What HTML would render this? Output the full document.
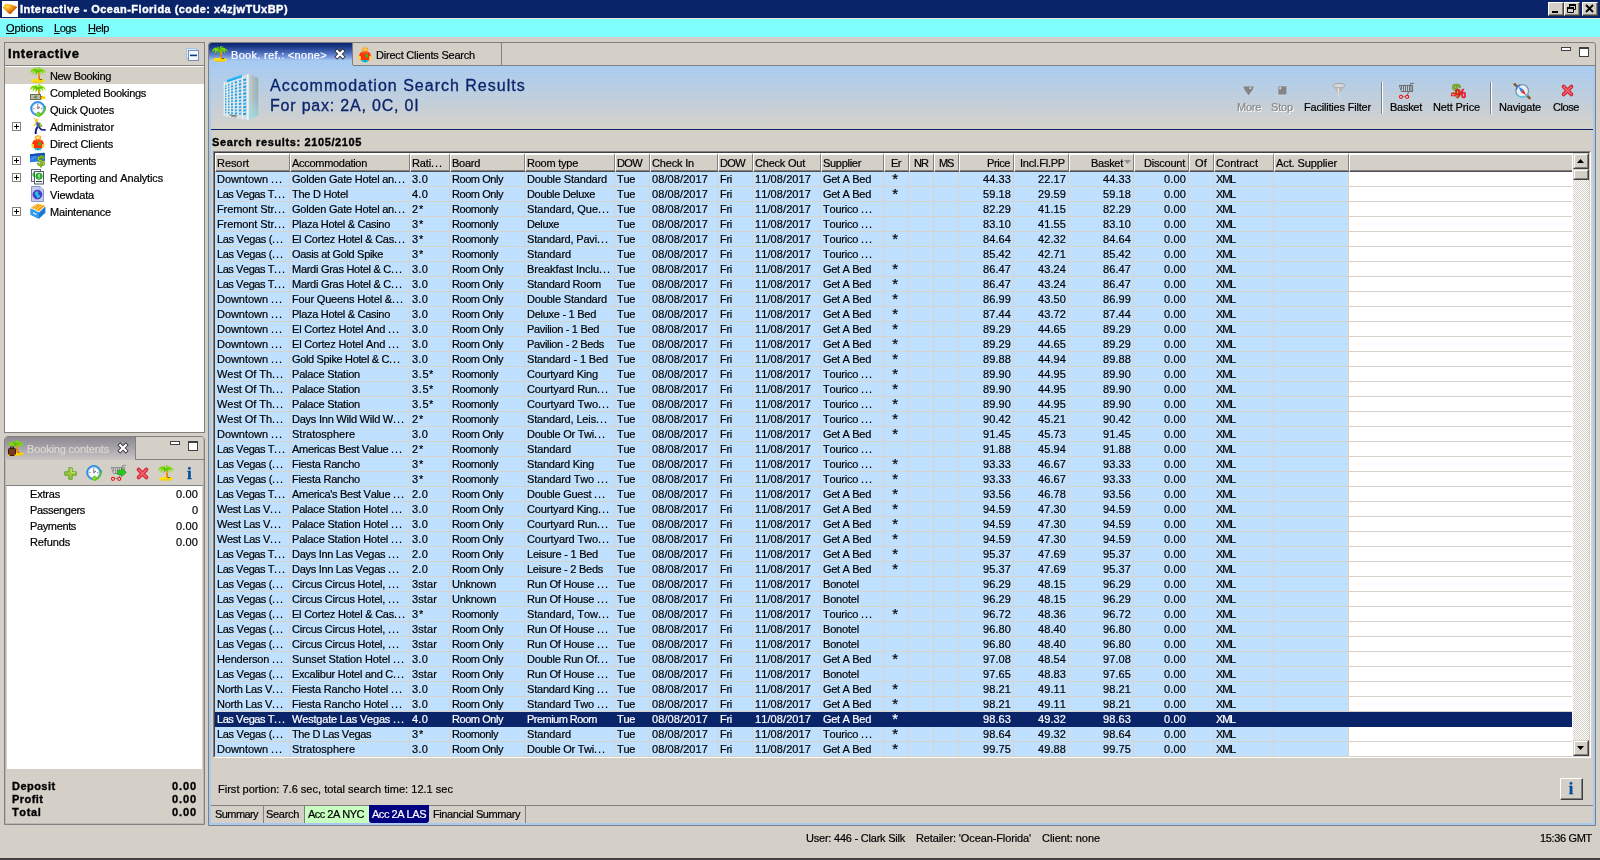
<!DOCTYPE html>
<html><head><meta charset="utf-8"><title>Interactive</title>
<style>
html,body{margin:0;padding:0}
body{width:1600px;height:860px;overflow:hidden;background:#d4d0c8;position:relative;font-family:"Liberation Sans",sans-serif;font-size:11px;color:#000;line-height:15px;font-kerning:none;font-variant-ligatures:none;-webkit-text-stroke:0.2px}
div,span{box-sizing:border-box}
#w{position:absolute;left:0;top:0;width:1600px;height:860px;overflow:hidden;will-change:transform}
.a{position:absolute}
.t{position:absolute;white-space:nowrap;line-height:13px}
.b{font-weight:bold;-webkit-text-stroke:0.35px}
svg{position:absolute;overflow:visible}
/* table */
#tb{position:absolute;left:215px;top:172px;width:1357px;height:584px;overflow:hidden;background:#fff}
.r{position:absolute;left:0;width:1357px;height:15px;background:#c0e0ff;border-bottom:1px solid #d8d4cc}
.r.w{background:#fff}
.c{position:absolute;top:0;height:14px;line-height:15px;white-space:nowrap;overflow:hidden;border-right:1px solid #d8d4cc;padding:0 2px 0 2px}
.c.rt{text-align:right;padding-right:2px}
.c.ct{text-align:center}
.c i,.h i{font-style:normal;letter-spacing:0.94px}
.c10{font-size:15px;line-height:14px}
.sel{background:#0a246a!important;color:#fff;border-bottom-color:#0a246a!important}
.sel .c{border-right-color:#0a246a}
.h{position:absolute;top:153px;height:19px;background:#d4d0c8;border-top:2px solid #fff;border-left:1px solid #fff;border-right:1px solid #808080;border-bottom:1px solid #505050;box-shadow:inset 0 -1px 0 #808080;line-height:15px;white-space:nowrap;overflow:hidden;padding:1px 2px 0 1px}
.h.rt{text-align:right;padding-right:3px}
.h.ct{text-align:center}
.k0{letter-spacing:-0.046px}.k1{letter-spacing:-0.22px}.k2{letter-spacing:0.236px}.k3{letter-spacing:-0.446px}.k4{letter-spacing:-0.171px}.k5{letter-spacing:-0.318px}.k6{letter-spacing:0.095px}.k7{letter-spacing:-0.275px}.k8{letter-spacing:-0.306px}.k9{letter-spacing:1.72px}.k10{letter-spacing:0.148px}.k11{letter-spacing:-1.21px}.k12{letter-spacing:-0.432px}.k13{letter-spacing:-0.245px}.k14{letter-spacing:-0.32px}.k15{letter-spacing:-0.097px}.k16{letter-spacing:0.801px}.k17{letter-spacing:-0.44px}.k18{letter-spacing:-0.042px}.k19{letter-spacing:-0.217px}.k20{letter-spacing:-0.297px}.k21{letter-spacing:-0.373px}.k22{letter-spacing:-0.336px}.k23{letter-spacing:-0.237px}.k24{letter-spacing:-0.154px}.k25{letter-spacing:-0.327px}.k26{letter-spacing:-0.081px}.k27{letter-spacing:-0.276px}.k28{letter-spacing:-0.05px}.k29{letter-spacing:-0.234px}.k30{letter-spacing:-0.175px}.k31{letter-spacing:-0.269px}.k32{letter-spacing:-0.183px}.k33{letter-spacing:-0.315px}.k34{letter-spacing:-0.326px}.k35{letter-spacing:-0.347px}.k36{letter-spacing:-0.135px}.k37{letter-spacing:-0.062px}.k38{letter-spacing:-0.21px}.k39{letter-spacing:0.607px}.k40{letter-spacing:-0.169px}.k41{letter-spacing:-0.118px}.k42{letter-spacing:-0.087px}.k43{letter-spacing:-0.138px}.k44{letter-spacing:0.002px}.k45{letter-spacing:-0.254px}.k46{letter-spacing:-0.308px}.k47{letter-spacing:-0.225px}.k48{letter-spacing:-0.209px}.k49{letter-spacing:-0.298px}.k50{letter-spacing:-0.255px}.k51{letter-spacing:-0.324px}.k52{letter-spacing:-0.178px}.k53{letter-spacing:-0.29px}.k54{letter-spacing:-0.24px}.k55{letter-spacing:-0.256px}.k56{letter-spacing:-0.202px}.k57{letter-spacing:0.109px}.k58{letter-spacing:-0.266px}.k59{letter-spacing:-0.212px}.k60{letter-spacing:-0.187px}.k61{letter-spacing:-0.041px}.k62{letter-spacing:-0.111px}.k63{letter-spacing:-0.28px}.k64{letter-spacing:-0.186px}.k65{letter-spacing:-0.198px}.k66{letter-spacing:-0.534px}.k67{letter-spacing:-0.4px}.c0{left:0px;width:75px}.c1{left:75px;width:120px}.c2{left:195px;width:40px}.c3{left:235px;width:75px}.c4{left:310px;width:90px}.c5{left:400px;width:35px}.c6{left:435px;width:68px}.c7{left:503px;width:35px}.c8{left:538px;width:68px}.c9{left:606px;width:63px}.c10{left:669px;width:25px}.c11{left:694px;width:25px}.c12{left:719px;width:25px}.c13{left:744px;width:55px}.c14{left:799px;width:55px}.c15{left:854px;width:65px}.c16{left:919px;width:55px}.c17{left:974px;width:25px}.c18{left:999px;width:60px}.c19{left:1059px;width:75px}</style></head><body>
<div id="w">
<div class="a" style="left:0;top:0;width:1600px;height:18px;background:#0a246a"></div>
<div class="a" style="left:0;top:18px;width:1600px;height:1px;background:#e8e6e0"></div>
<div class="a" style="left:2px;top:1px;width:16px;height:16px;background:#fff"></div>
<svg style="left:2px;top:1px" width="16" height="16" viewBox="0 0 16 16"><defs><radialGradient id="gg" cx="0.32" cy="0.25" r="0.8"><stop offset="0" stop-color="#ffe84a"/><stop offset="0.35" stop-color="#f8a818"/><stop offset="0.7" stop-color="#d86c0c"/><stop offset="1" stop-color="#a84408"/></radialGradient></defs><path d="M1.2 6.8 L3.6 3.2 L9.4 4 L14.8 6.2 L8.6 12.8 L6.6 12z" fill="url(#gg)" stroke="url(#gg)" stroke-width="0.8" stroke-linejoin="round"/></svg>
<div class="t b" style="left:20px;top:3px;letter-spacing:0.458px;color:#fff">Interactive - Ocean-Florida (code: x4zjwTUxBP)</div>
<div class="a" style="left:1548px;top:2px;width:16px;height:14px;background:#d4d0c8;border-top:1px solid #fff;border-left:1px solid #fff;border-right:1px solid #404040;border-bottom:1px solid #404040"></div><div class="a" style="left:1549px;top:3px;width:14px;height:12px;border-right:1px solid #808080;border-bottom:1px solid #808080"></div>
<div class="a" style="left:1564px;top:2px;width:16px;height:14px;background:#d4d0c8;border-top:1px solid #fff;border-left:1px solid #fff;border-right:1px solid #404040;border-bottom:1px solid #404040"></div><div class="a" style="left:1565px;top:3px;width:14px;height:12px;border-right:1px solid #808080;border-bottom:1px solid #808080"></div>
<div class="a" style="left:1582px;top:2px;width:16px;height:14px;background:#d4d0c8;border-top:1px solid #fff;border-left:1px solid #fff;border-right:1px solid #404040;border-bottom:1px solid #404040"></div><div class="a" style="left:1583px;top:3px;width:14px;height:12px;border-right:1px solid #808080;border-bottom:1px solid #808080"></div>
<div class="a" style="left:1552px;top:11px;width:6px;height:2px;background:#000"></div>
<svg style="left:1564px;top:2px" width="16" height="14"><path d="M5.5 3.5h6v4h-6z M5 3h7" fill="none" stroke="#000" stroke-width="1"/><rect x="5" y="2" width="7" height="2" fill="#000"/><rect x="3" y="6" width="6" height="5" fill="#d4d0c8"/><path d="M3.5 6.5h6v4h-6z" fill="none" stroke="#000"/><rect x="3" y="5" width="7" height="2" fill="#000"/></svg>
<svg style="left:1582px;top:2px" width="16" height="14"><path d="M4 3l7 7M11 3l-7 7" stroke="#000" stroke-width="1.8" fill="none"/></svg>
<div class="a" style="left:0;top:19px;width:1600px;height:18px;background:#80ffff"></div>
<div class="t" style="left:6px;top:22px;letter-spacing:-0.13px;"><u>O</u>ptions</div>
<div class="t" style="left:54px;top:22px;letter-spacing:-0.463px;"><u>L</u>ogs</div>
<div class="t" style="left:88px;top:22px;letter-spacing:-0.406px;"><u>H</u>elp</div>
<div class="a" style="left:4px;top:42px;width:201px;height:391px;border:1px solid #808080;background:#d4d0c8"></div>
<div class="a" style="left:5px;top:65px;width:199px;height:1px;background:#808080"></div>
<div class="a" style="left:5px;top:66px;width:199px;height:366px;background:#fff"></div>
<div class="a" style="left:5px;top:67px;width:199px;height:17px;background:#d4d0c8"></div>
<div class="t b" style="left:8px;top:45px;letter-spacing:0.588px;font-size:13px;line-height:17px">Interactive</div>
<svg style="left:186px;top:48px" width="14" height="14" viewBox="0 0 14 14"><rect x="0.5" y="0.5" width="10" height="10" fill="#dcecfa" stroke="#a8c0e0"/><rect x="2.5" y="2.5" width="10" height="10" fill="#f4f9ff" stroke="#7a8cb8"/><rect x="4" y="6.6" width="7" height="1.6" fill="#0a3a7a"/></svg>
<div class="t" style="left:50px;top:70px;letter-spacing:-0.347px;">New Booking</div>
<svg style="left:30px;top:67px" width="16" height="16" viewBox="0 0 16 16"><ellipse cx="8" cy="13.6" rx="7" ry="1.9" fill="#ffe010"/><path d="M2.4 14.4h11.2l-1.6 1.2h-8z" fill="#f4c400"/><path d="M7.2 4 C8.2 6.4 8.4 9.6 8 12.8 L10 12.8 C10.2 9.4 9.8 6.2 8.8 3.8z" fill="#f0a410"/><path d="M8.6 6.4l0.9 0.5M8.4 9l1.2 0.4M9 11l0.8 0.2" stroke="#c43c00" stroke-width="0.9"/><path d="M9.6 12.2h2.6v0.9h-2.6z" fill="#6a3a08"/><path d="M7.8 3.8 C6.4 1.2 3.4 0.6 1.6 2.6 C0.6 3.8 0.2 5.2 0.2 6.6 C1.2 5 2.2 4.2 3.4 4 C2.6 5.2 2.4 6.6 2.8 8 C3.6 6.2 4.6 5.2 6 4.8 C5.4 6 5.4 7.4 5.8 8.6 C6.4 6.8 7 5.6 8 5 C9 5.4 9.8 6.6 10.2 8.2 C10.8 6.8 10.6 5.6 10 4.6 C11.4 5 12.4 6 13 7.8 C13.6 6.4 13.2 5 12.4 4 C13.6 4.2 14.8 5 15.8 6.4 C15.6 4.4 14.6 3 13 2.4 C11.6 1 9.4 1.2 7.8 3.8z" fill="#7cdc00"/><path d="M7.8 3.8 C6.8 2.4 5.2 2 3.6 2.6 C5.2 2.8 6.2 3.6 6.6 4.8 C5.8 6 5.6 7.2 5.8 8.6 C6.4 6.8 7 5.6 8 5 C9.2 4.2 10.8 4 12.4 4 C11.2 3 9.2 3 7.8 3.8z" fill="#54b400"/><path d="M8 0.6 C8.8 0 10 0 10.8 0.6 C9.8 1 9 1.8 8.4 3z M5 0.8 C6 0.4 7 0.8 7.6 1.8 L7.6 3.2 C7 2 6 1.2 5 0.8z" fill="#7cdc00"/></svg>
<div class="t" style="left:50px;top:87px;letter-spacing:-0.306px;">Completed Bookings</div>
<svg style="left:30px;top:84px" width="16" height="16" viewBox="0 0 16 16"><ellipse cx="8" cy="13.6" rx="7" ry="1.9" fill="#ffe010"/><path d="M2.4 14.4h11.2l-1.6 1.2h-8z" fill="#f4c400"/><path d="M7.2 4 C8.2 6.4 8.4 9.6 8 12.8 L10 12.8 C10.2 9.4 9.8 6.2 8.8 3.8z" fill="#f0a410"/><path d="M8.6 6.4l0.9 0.5M8.4 9l1.2 0.4M9 11l0.8 0.2" stroke="#c43c00" stroke-width="0.9"/><path d="M9.6 12.2h2.6v0.9h-2.6z" fill="#6a3a08"/><path d="M7.8 3.8 C6.4 1.2 3.4 0.6 1.6 2.6 C0.6 3.8 0.2 5.2 0.2 6.6 C1.2 5 2.2 4.2 3.4 4 C2.6 5.2 2.4 6.6 2.8 8 C3.6 6.2 4.6 5.2 6 4.8 C5.4 6 5.4 7.4 5.8 8.6 C6.4 6.8 7 5.6 8 5 C9 5.4 9.8 6.6 10.2 8.2 C10.8 6.8 10.6 5.6 10 4.6 C11.4 5 12.4 6 13 7.8 C13.6 6.4 13.2 5 12.4 4 C13.6 4.2 14.8 5 15.8 6.4 C15.6 4.4 14.6 3 13 2.4 C11.6 1 9.4 1.2 7.8 3.8z" fill="#7cdc00"/><path d="M7.8 3.8 C6.8 2.4 5.2 2 3.6 2.6 C5.2 2.8 6.2 3.6 6.6 4.8 C5.8 6 5.6 7.2 5.8 8.6 C6.4 6.8 7 5.6 8 5 C9.2 4.2 10.8 4 12.4 4 C11.2 3 9.2 3 7.8 3.8z" fill="#54b400"/><path d="M8 0.6 C8.8 0 10 0 10.8 0.6 C9.8 1 9 1.8 8.4 3z M5 0.8 C6 0.4 7 0.8 7.6 1.8 L7.6 3.2 C7 2 6 1.2 5 0.8z" fill="#7cdc00"/><rect x="0.5" y="10.5" width="10" height="5" fill="#b4bc9c" stroke="#6a705a" stroke-width="1"/><ellipse cx="5.5" cy="13" rx="1.8" ry="1.5" fill="#7c846a"/><rect x="11" y="12.5" width="4.5" height="2.2" rx="1" fill="#ffc800"/></svg>
<div class="t" style="left:50px;top:104px;letter-spacing:-0.22px;">Quick Quotes</div>
<svg style="left:30px;top:101px" width="17" height="17" viewBox="0 0 17 17"><circle cx="7.8" cy="7.6" r="7.1" fill="#2a9af8"/><circle cx="7.8" cy="7.6" r="7.1" fill="none" stroke="#1a78e0" stroke-width="0.8"/><circle cx="7.8" cy="7.6" r="5.4" fill="#fbfbfd"/><circle cx="7.8" cy="7.6" r="5.4" fill="none" stroke="#c4ccd8" stroke-width="0.7"/><path d="M7.8 3.2v1M7.8 11v1M3.4 7.6h1M11.2 7.6h1" stroke="#505050" stroke-width="0.9"/><path d="M7.8 7.8V4.6M7.8 7.8l2.2-1.8" stroke="#505050" stroke-width="0.9" fill="none"/><path d="M16.2 5 C16.6 10 13.2 14.6 8.4 16.2 L5.2 12.4 L8 12.6 L8.8 10.4 L10.8 12.4 C13.2 11.4 15 8.6 15 5.2z" fill="#62c41c"/><path d="M8.4 16.2 L5.2 12.4 L8 12.6 L8.8 10.4 L10.8 12.4 L9.6 13z" fill="#7cd82c"/></svg>
<div class="t" style="left:50px;top:121px;letter-spacing:-0.061px;">Administrator</div>
<svg style="left:30px;top:118px" width="16" height="16" viewBox="0 0 16 16"><circle cx="6.6" cy="2.4" r="1.7" fill="#f8c820"/><path d="M5.2 1.2l-1.4-0.8" stroke="#f8c820" stroke-width="1.1"/><path d="M5.6 4 L9.2 4.4 L10.4 8.4 L7 9.4z" fill="#4a5aa4"/><path d="M8.4 4.6 L10.8 5.6 L12.6 8.2 L10.6 9 L9.2 8.6z" fill="#3ea03e"/><path d="M10.4 5.8l0.6 2.4" stroke="#f8c820" stroke-width="1.2"/><path d="M6 5.6 L3.8 7.2" stroke="#f8c820" stroke-width="1.3" stroke-linecap="round"/><path d="M7.4 9 L6 11.8 L5.6 15" stroke="#1a2090" stroke-width="2" fill="none"/><path d="M8.8 9 L11.4 11.6 L15.8 12" stroke="#1a2090" stroke-width="1.7" fill="none"/><path d="M4.8 14.6h1.8v1.4h-1.8z" fill="#0c1060"/></svg>
<div class="a" style="left:12px;top:122px;width:9px;height:9px;border:1px solid #808080;background:#fff"></div>
<div class="a" style="left:14px;top:126px;width:5px;height:1px;background:#000"></div>
<div class="a" style="left:16px;top:124px;width:1px;height:5px;background:#000"></div>
<div class="t" style="left:50px;top:138px;letter-spacing:-0.172px;">Direct Clients</div>
<svg style="left:30px;top:135px" width="16" height="16" viewBox="0 0 16 16"><ellipse cx="8" cy="2.6" rx="2.6" ry="1.7" fill="none" stroke="#ffa818" stroke-width="1.3"/><path d="M6.4 2.8h3.2" stroke="#ffd428" stroke-width="1"/><path d="M3 6.2 C4.2 4.8 6 4.6 8 4.6 C10 4.6 11.8 4.8 13 6.2 L14 9 L12.2 9.6 L12.4 13.4 L3.6 13.4 L3.8 9.6 L2 9z" fill="#ff3400"/><path d="M5 5.4l1.2 1M11 5.4l-1.2 1M8 5v1.6" stroke="#ffa040" stroke-width="0.7"/><rect x="8.2" y="7.4" width="2.8" height="2.8" fill="#28c048"/><path d="M1.6 8.6 L3.6 9.6 L3.6 12.6 L2.2 12.8 C1.4 11.4 1.2 10 1.6 8.6z M14.4 8.6 L12.4 9.6 L12.4 12.6 L13.8 12.8 C14.6 11.4 14.8 10 14.4 8.6z" fill="#ffd820"/><rect x="5" y="13" width="6" height="2.2" fill="#18c8d8"/><rect x="7.5" y="13" width="1" height="2.2" fill="#0a8098"/></svg>
<div class="t" style="left:50px;top:155px;letter-spacing:-0.364px;">Payments</div>
<svg style="left:30px;top:152px" width="16" height="16" viewBox="0 0 16 16"><path d="M0 2.2 L14 0.8 L15 1.6 L15 9 L0 10.2z" fill="#2c7ce8"/><path d="M0 2.2 L14 0.8 L15 1.6 L15 3 L0 4.4z" fill="#1450b8"/><path d="M1.6 7.2l4-3" stroke="#7ab4ff" stroke-width="0.8"/><text x="11" y="14" font-family="Liberation Sans" font-weight="bold" font-size="14" text-anchor="middle" fill="#a4d820" stroke="#4a7a08" stroke-width="0.5">$</text></svg>
<div class="a" style="left:12px;top:156px;width:9px;height:9px;border:1px solid #808080;background:#fff"></div>
<div class="a" style="left:14px;top:160px;width:5px;height:1px;background:#000"></div>
<div class="a" style="left:16px;top:158px;width:1px;height:5px;background:#000"></div>
<div class="t" style="left:50px;top:172px;letter-spacing:-0.138px;">Reporting and Analytics</div>
<svg style="left:30px;top:169px" width="16" height="16" viewBox="0 0 16 16"><rect x="1.5" y="0.5" width="9" height="12" fill="#f4f6fa" stroke="#5a6a7a"/><circle cx="5" cy="5.5" r="2.6" fill="#38c038"/><rect x="4.5" y="2.5" width="9" height="12.5" fill="#f8fafc" stroke="#4a5a6a"/><circle cx="9" cy="7.2" r="3.2" fill="#28b828"/><circle cx="9" cy="7.2" r="3.2" fill="none" stroke="#148014" stroke-width="0.6"/><rect x="8.5" y="5" width="1" height="3" fill="#fff"/><rect x="8.5" y="8.6" width="1" height="1" fill="#fff"/><rect x="6" y="12" width="6" height="1" fill="#404040"/></svg>
<div class="a" style="left:12px;top:173px;width:9px;height:9px;border:1px solid #808080;background:#fff"></div>
<div class="a" style="left:14px;top:177px;width:5px;height:1px;background:#000"></div>
<div class="a" style="left:16px;top:175px;width:1px;height:5px;background:#000"></div>
<div class="t" style="left:50px;top:189px;letter-spacing:-0.156px;">Viewdata</div>
<svg style="left:30px;top:186px" width="16" height="16" viewBox="0 0 16 16"><path d="M1.5 0.5h8.5l3.5 3.5v11.5h-12z" fill="#c4cdee" stroke="#8a96c4"/><path d="M10 0.5v3.5h3.5z" fill="#eef0fa" stroke="#8a96c4" stroke-width="0.6"/><circle cx="7.4" cy="8.6" r="4.4" fill="#3048d8"/><circle cx="7.4" cy="8.6" r="4.4" fill="none" stroke="#6a28b8" stroke-width="1"/><path d="M5.2 6.2c1.2-1.2 2.6-1.2 3.2-0.4 0.2 1-0.6 1.8-0.4 2.8 0.8 0.6 1.8 0.4 2.2 1.4-0.4 1.4-1.4 2-2.8 2.2-0.6-1-0.4-2-1.4-2.8-0.8-0.8-1.2-2-0.8-3.2z" fill="#28c8d8"/></svg>
<div class="t" style="left:50px;top:206px;letter-spacing:-0.181px;">Maintenance</div>
<svg style="left:30px;top:203px" width="16" height="16" viewBox="0 0 16 16"><path d="M0.6 5.4 L9 9.4 L15.4 3.4 L15.4 9.8 L9 15.8 L0.6 11.8z" fill="#1a78d8"/><path d="M0.6 5.4 L9 9.4 L9 15.8 L0.6 11.8z" fill="#2c9cf0"/><path d="M1 4.6 L7.4 0.4 L15.2 2.8 L9 8.6z" fill="#ffb41e"/><path d="M2.6 4.6 L8 1.2 M4.4 5.6 L10 2 M6.4 6.6 L12 2.6" stroke="#ffe27a" stroke-width="0.9"/><path d="M3.4 5 L9 1.6 M5.4 6 L11 2.2 M7.6 7 L13.4 3" stroke="#d87a10" stroke-width="0.7"/><rect x="3" y="9.6" width="3.4" height="1.6" fill="#bfe2ff" transform="skewY(25) translate(0,-2)"/></svg>
<div class="a" style="left:12px;top:207px;width:9px;height:9px;border:1px solid #808080;background:#fff"></div>
<div class="a" style="left:14px;top:211px;width:5px;height:1px;background:#000"></div>
<div class="a" style="left:16px;top:209px;width:1px;height:5px;background:#000"></div>
<div class="a" style="left:4px;top:436px;width:201px;height:389px;border:1px solid #808080;border-radius:4px 4px 0 0"></div>
<div class="a" style="left:5px;top:437px;width:199px;height:387px;border:1px solid #bcb8b0;border-top:none"></div>
<div class="a" style="left:5px;top:437px;width:131px;height:23px;background:linear-gradient(#8c8a90,#a29ea6 40%,#bab6ba 78%,#cac6c4);border-radius:3px 0 0 0;border-right:1px solid #808080"></div>
<div class="a" style="left:136px;top:459px;width:68px;height:1px;background:#808080"></div>
<div class="t" style="left:27px;top:443px;letter-spacing:-0.149px;color:#dcd8d0">Booking contents</div>
<svg style="left:8px;top:440px" width="16" height="16" viewBox="0 0 16 16"><ellipse cx="8" cy="13.6" rx="7" ry="1.9" fill="#ffe010"/><path d="M2.4 14.4h11.2l-1.6 1.2h-8z" fill="#f4c400"/><path d="M7.2 4 C8.2 6.4 8.4 9.6 8 12.8 L10 12.8 C10.2 9.4 9.8 6.2 8.8 3.8z" fill="#f0a410"/><path d="M8.6 6.4l0.9 0.5M8.4 9l1.2 0.4M9 11l0.8 0.2" stroke="#c43c00" stroke-width="0.9"/><path d="M9.6 12.2h2.6v0.9h-2.6z" fill="#6a3a08"/><path d="M7.8 3.8 C6.4 1.2 3.4 0.6 1.6 2.6 C0.6 3.8 0.2 5.2 0.2 6.6 C1.2 5 2.2 4.2 3.4 4 C2.6 5.2 2.4 6.6 2.8 8 C3.6 6.2 4.6 5.2 6 4.8 C5.4 6 5.4 7.4 5.8 8.6 C6.4 6.8 7 5.6 8 5 C9 5.4 9.8 6.6 10.2 8.2 C10.8 6.8 10.6 5.6 10 4.6 C11.4 5 12.4 6 13 7.8 C13.6 6.4 13.2 5 12.4 4 C13.6 4.2 14.8 5 15.8 6.4 C15.6 4.4 14.6 3 13 2.4 C11.6 1 9.4 1.2 7.8 3.8z" fill="#7cdc00"/><path d="M7.8 3.8 C6.8 2.4 5.2 2 3.6 2.6 C5.2 2.8 6.2 3.6 6.6 4.8 C5.8 6 5.6 7.2 5.8 8.6 C6.4 6.8 7 5.6 8 5 C9.2 4.2 10.8 4 12.4 4 C11.2 3 9.2 3 7.8 3.8z" fill="#54b400"/><path d="M8 0.6 C8.8 0 10 0 10.8 0.6 C9.8 1 9 1.8 8.4 3z M5 0.8 C6 0.4 7 0.8 7.6 1.8 L7.6 3.2 C7 2 6 1.2 5 0.8z" fill="#7cdc00"/><rect x="0.5" y="8.5" width="7" height="7" rx="1" fill="#7a3a1a" stroke="#3a1a08" stroke-width="1"/><path d="M2.5 8.5v-1.5h3v1.5" fill="none" stroke="#3a1a08"/><rect x="0" y="14.5" width="1.5" height="1.5" fill="#ffd800"/><rect x="6.5" y="14.5" width="1.5" height="1.5" fill="#ffd800"/><rect x="10" y="12.5" width="5.5" height="2.5" rx="1" fill="#ffc800"/></svg>
<svg style="left:118px;top:443px" width="10" height="10" viewBox="0 0 10 10"><path d="M2.2 2.2L7.8 7.8M7.8 2.2L2.2 7.8" stroke="#303030" stroke-width="4" stroke-linecap="square"/><path d="M2.2 2.2L7.8 7.8M7.8 2.2L2.2 7.8" stroke="#fff" stroke-width="2.3" stroke-linecap="square"/></svg>
<svg style="left:170px;top:441px" width="30" height="11" viewBox="0 0 30 11"><rect x="0.5" y="0.5" width="9" height="3" fill="#fff" stroke="#404040"/><rect x="18.5" y="0.5" width="9" height="9" fill="#fff" stroke="#404040"/><rect x="18" y="0" width="10" height="2" fill="#404040"/></svg>
<div class="a" style="left:6px;top:485px;width:197px;height:1px;background:#808080"></div>
<div class="a" style="left:7px;top:486px;width:195px;height:283px;background:#fff"></div>
<div class="t" style="left:30px;top:488px;letter-spacing:-0.196px;">Extras</div>
<div class="t" style="left:100px;top:488px;letter-spacing:0.148px;width:98px;text-align:right">0.00</div>
<div class="t" style="left:30px;top:504px;letter-spacing:-0.309px;">Passengers</div>
<div class="t" style="left:100px;top:504px;letter-spacing:-0.118px;width:98px;text-align:right">0</div>
<div class="t" style="left:30px;top:520px;letter-spacing:-0.364px;">Payments</div>
<div class="t" style="left:100px;top:520px;letter-spacing:0.148px;width:98px;text-align:right">0.00</div>
<div class="t" style="left:30px;top:536px;letter-spacing:-0.139px;">Refunds</div>
<div class="t" style="left:100px;top:536px;letter-spacing:0.148px;width:98px;text-align:right">0.00</div>
<div class="t b" style="left:12px;top:780px;letter-spacing:0.452px;">Deposit</div>
<div class="t b" style="left:100px;top:780px;letter-spacing:0.898px;width:97px;text-align:right">0.00</div>
<div class="t b" style="left:12px;top:793px;letter-spacing:0.463px;">Profit</div>
<div class="t b" style="left:100px;top:793px;letter-spacing:0.898px;width:97px;text-align:right">0.00</div>
<div class="t b" style="left:12px;top:806px;letter-spacing:0.645px;">Total</div>
<div class="t b" style="left:100px;top:806px;letter-spacing:0.898px;width:97px;text-align:right">0.00</div>
<svg style="left:64px;top:467px" width="13" height="13" viewBox="0 0 13 13"><path d="M4.8 0.8h3.4v4h4v3.4h-4v4h-3.4v-4h-4v-3.4h4z" fill="#9cc83c" stroke="#5a9a24" stroke-width="0.9"/><path d="M5.6 1.8h1.8v3.8h3.8" stroke="#d4ec8a" stroke-width="0.8" fill="none"/></svg><svg style="left:86px;top:465px" width="17" height="17" viewBox="0 0 17 17"><circle cx="7.8" cy="7.6" r="7.1" fill="#2a9af8"/><circle cx="7.8" cy="7.6" r="7.1" fill="none" stroke="#1a78e0" stroke-width="0.8"/><circle cx="7.8" cy="7.6" r="5.4" fill="#fbfbfd"/><circle cx="7.8" cy="7.6" r="5.4" fill="none" stroke="#c4ccd8" stroke-width="0.7"/><path d="M7.8 3.2v1M7.8 11v1M3.4 7.6h1M11.2 7.6h1" stroke="#505050" stroke-width="0.9"/><path d="M7.8 7.8V4.6M7.8 7.8l2.2-1.8" stroke="#505050" stroke-width="0.9" fill="none"/><path d="M16.2 5 C16.6 10 13.2 14.6 8.4 16.2 L5.2 12.4 L8 12.6 L8.8 10.4 L10.8 12.4 C13.2 11.4 15 8.6 15 5.2z" fill="#62c41c"/><path d="M8.4 16.2 L5.2 12.4 L8 12.6 L8.8 10.4 L10.8 12.4 L9.6 13z" fill="#7cd82c"/></svg><svg style="left:110px;top:464px" width="17" height="17" viewBox="0 0 17 17"><path d="M1 3.5H15M1.4 3.5L3.4 9.5H15M14.6 3.5V9.5" fill="none" stroke="#909090" stroke-width="1"/><path d="M3.6 4v3.4M5.5 4v5.5M7.5 4v5.5M9.5 4v5.5M11.5 4v5.5M13 4v5.5" stroke="#909090" stroke-width="1"/><path d="M12.5 3.5V1.4H16" stroke="#909090" stroke-width="1" fill="none"/><path d="M10.6 10L9.2 13.4" stroke="#909090" stroke-width="1"/><path d="M4.6 14.6H7.6" stroke="#6a9898" stroke-width="1"/><circle cx="3" cy="14.8" r="1.5" fill="#fff" stroke="#f01414" stroke-width="1.2"/><circle cx="9.2" cy="14.8" r="1.5" fill="#fff" stroke="#f01414" stroke-width="1.2"/><path d="M7.4 6.4h4v-2.4l5 4.4 -5 4.4v-2.4h-4z" fill="#28c828" stroke="#148a14" stroke-width="0.6"/></svg><svg style="left:136px;top:466.6px" width="13" height="13" viewBox="0 0 13 13"><path d="M2.6 2.6L10.4 10.4M10.4 2.6L2.6 10.4" stroke="#c42030" stroke-width="3.8" stroke-linecap="round"/><path d="M2.6 2.6L10.4 10.4M10.4 2.6L2.6 10.4" stroke="#f04858" stroke-width="2.2" stroke-linecap="round"/><path d="M3 3L10 10M10 3L3 10" stroke="#f87080" stroke-width="0.8" stroke-linecap="round"/></svg><svg style="left:158px;top:465px" width="16" height="16" viewBox="0 0 16 16"><ellipse cx="8" cy="13.6" rx="7" ry="1.9" fill="#ffe010"/><path d="M2.4 14.4h11.2l-1.6 1.2h-8z" fill="#f4c400"/><path d="M7.2 4 C8.2 6.4 8.4 9.6 8 12.8 L10 12.8 C10.2 9.4 9.8 6.2 8.8 3.8z" fill="#f0a410"/><path d="M8.6 6.4l0.9 0.5M8.4 9l1.2 0.4M9 11l0.8 0.2" stroke="#c43c00" stroke-width="0.9"/><path d="M9.6 12.2h2.6v0.9h-2.6z" fill="#6a3a08"/><path d="M7.8 3.8 C6.4 1.2 3.4 0.6 1.6 2.6 C0.6 3.8 0.2 5.2 0.2 6.6 C1.2 5 2.2 4.2 3.4 4 C2.6 5.2 2.4 6.6 2.8 8 C3.6 6.2 4.6 5.2 6 4.8 C5.4 6 5.4 7.4 5.8 8.6 C6.4 6.8 7 5.6 8 5 C9 5.4 9.8 6.6 10.2 8.2 C10.8 6.8 10.6 5.6 10 4.6 C11.4 5 12.4 6 13 7.8 C13.6 6.4 13.2 5 12.4 4 C13.6 4.2 14.8 5 15.8 6.4 C15.6 4.4 14.6 3 13 2.4 C11.6 1 9.4 1.2 7.8 3.8z" fill="#7cdc00"/><path d="M7.8 3.8 C6.8 2.4 5.2 2 3.6 2.6 C5.2 2.8 6.2 3.6 6.6 4.8 C5.8 6 5.6 7.2 5.8 8.6 C6.4 6.8 7 5.6 8 5 C9.2 4.2 10.8 4 12.4 4 C11.2 3 9.2 3 7.8 3.8z" fill="#54b400"/><path d="M8 0.6 C8.8 0 10 0 10.8 0.6 C9.8 1 9 1.8 8.4 3z M5 0.8 C6 0.4 7 0.8 7.6 1.8 L7.6 3.2 C7 2 6 1.2 5 0.8z" fill="#7cdc00"/></svg><div class="t b" style="left:187px;top:465px;font-family:'Liberation Serif',serif;font-size:17px;line-height:18px;color:#0050a0">i</div>
<div class="a" style="left:208px;top:42px;width:1388px;height:784px;border:1px solid #808080;border-radius:3px 3px 0 0"></div>
<div class="a" style="left:209px;top:66px;width:1386px;height:759px;border:2px solid #a6caf0;border-top:none"></div>
<div class="a" style="left:352px;top:65px;width:1243px;height:1px;background:#808080"></div>
<div class="a" style="left:209px;top:43px;width:144px;height:23px;background:linear-gradient(#0a246a,#1e3c8c 18%,#4466b4 40%,#7496dc 60%,#9cc0f0 73%,#a6caf0 78%);border-radius:3px 0 0 0"></div>
<div class="a" style="left:352px;top:43px;width:1px;height:22px;background:#808080"></div>
<svg style="left:212px;top:46px" width="16" height="16" viewBox="0 0 16 16"><ellipse cx="8" cy="13.6" rx="7" ry="1.9" fill="#ffe010"/><path d="M2.4 14.4h11.2l-1.6 1.2h-8z" fill="#f4c400"/><path d="M7.2 4 C8.2 6.4 8.4 9.6 8 12.8 L10 12.8 C10.2 9.4 9.8 6.2 8.8 3.8z" fill="#f0a410"/><path d="M8.6 6.4l0.9 0.5M8.4 9l1.2 0.4M9 11l0.8 0.2" stroke="#c43c00" stroke-width="0.9"/><path d="M9.6 12.2h2.6v0.9h-2.6z" fill="#6a3a08"/><path d="M7.8 3.8 C6.4 1.2 3.4 0.6 1.6 2.6 C0.6 3.8 0.2 5.2 0.2 6.6 C1.2 5 2.2 4.2 3.4 4 C2.6 5.2 2.4 6.6 2.8 8 C3.6 6.2 4.6 5.2 6 4.8 C5.4 6 5.4 7.4 5.8 8.6 C6.4 6.8 7 5.6 8 5 C9 5.4 9.8 6.6 10.2 8.2 C10.8 6.8 10.6 5.6 10 4.6 C11.4 5 12.4 6 13 7.8 C13.6 6.4 13.2 5 12.4 4 C13.6 4.2 14.8 5 15.8 6.4 C15.6 4.4 14.6 3 13 2.4 C11.6 1 9.4 1.2 7.8 3.8z" fill="#7cdc00"/><path d="M7.8 3.8 C6.8 2.4 5.2 2 3.6 2.6 C5.2 2.8 6.2 3.6 6.6 4.8 C5.8 6 5.6 7.2 5.8 8.6 C6.4 6.8 7 5.6 8 5 C9.2 4.2 10.8 4 12.4 4 C11.2 3 9.2 3 7.8 3.8z" fill="#54b400"/><path d="M8 0.6 C8.8 0 10 0 10.8 0.6 C9.8 1 9 1.8 8.4 3z M5 0.8 C6 0.4 7 0.8 7.6 1.8 L7.6 3.2 C7 2 6 1.2 5 0.8z" fill="#7cdc00"/></svg>
<div class="t" style="left:231px;top:49px;letter-spacing:0.305px;color:#fff">Book. ref.: &lt;none&gt;</div>
<svg style="left:335px;top:49px" width="10" height="10" viewBox="0 0 10 10"><path d="M2.2 2.2L7.8 7.8M7.8 2.2L2.2 7.8" stroke="#303030" stroke-width="4" stroke-linecap="square"/><path d="M2.2 2.2L7.8 7.8M7.8 2.2L2.2 7.8" stroke="#fff" stroke-width="2.3" stroke-linecap="square"/></svg>
<div class="a" style="left:501px;top:43px;width:1px;height:22px;background:#808080"></div>
<svg style="left:357px;top:47px" width="16" height="16" viewBox="0 0 16 16"><ellipse cx="8" cy="2.6" rx="2.6" ry="1.7" fill="none" stroke="#ffa818" stroke-width="1.3"/><path d="M6.4 2.8h3.2" stroke="#ffd428" stroke-width="1"/><path d="M3 6.2 C4.2 4.8 6 4.6 8 4.6 C10 4.6 11.8 4.8 13 6.2 L14 9 L12.2 9.6 L12.4 13.4 L3.6 13.4 L3.8 9.6 L2 9z" fill="#ff3400"/><path d="M5 5.4l1.2 1M11 5.4l-1.2 1M8 5v1.6" stroke="#ffa040" stroke-width="0.7"/><rect x="8.2" y="7.4" width="2.8" height="2.8" fill="#28c048"/><path d="M1.6 8.6 L3.6 9.6 L3.6 12.6 L2.2 12.8 C1.4 11.4 1.2 10 1.6 8.6z M14.4 8.6 L12.4 9.6 L12.4 12.6 L13.8 12.8 C14.6 11.4 14.8 10 14.4 8.6z" fill="#ffd820"/><rect x="5" y="13" width="6" height="2.2" fill="#18c8d8"/><rect x="7.5" y="13" width="1" height="2.2" fill="#0a8098"/></svg>
<div class="t" style="left:376px;top:49px;letter-spacing:-0.205px;">Direct Clients Search</div>
<svg style="left:1561px;top:47px" width="30" height="11" viewBox="0 0 30 11"><rect x="0.5" y="0.5" width="9" height="3" fill="#fff" stroke="#404040"/><rect x="18.5" y="0.5" width="9" height="9" fill="#fff" stroke="#404040"/><rect x="18" y="0" width="10" height="2" fill="#404040"/></svg>
<div class="a" style="left:211px;top:66px;width:1382px;height:63px;background:linear-gradient(#a6caf0,#d4d0c8)"></div>
<div class="a" style="left:211px;top:66px;width:1382px;height:63px;background:repeating-linear-gradient(rgba(255,255,255,0) 0,rgba(255,255,255,0) 1px,rgba(255,255,255,0.07) 1px,rgba(255,255,255,0.07) 2px)"></div>
<div class="a" style="left:211px;top:129px;width:1382px;height:1px;background:#0a246a"></div>
<svg style="left:223px;top:73px" width="36" height="48" viewBox="0 0 36 48"><defs><linearGradient id="bg1" x1="0" y1="0" x2="1" y2="0"><stop offset="0" stop-color="#c4d0d4"/><stop offset="0.5" stop-color="#aebcc0"/><stop offset="1" stop-color="#98acb0"/></linearGradient><linearGradient id="bg2" x1="0" y1="0" x2="0" y2="1"><stop offset="0" stop-color="#a0e8f0" stop-opacity="0"/><stop offset="0.55" stop-color="#a0e8f0" stop-opacity="0.1"/><stop offset="1" stop-color="#9ae4ee" stop-opacity="0.75"/></linearGradient></defs><path d="M1 9.2 L25.4 1 L25.4 47 L1 42.9z" fill="#d6dee2"/><path d="M25.4 1 L35.2 5 L35.2 42.2 L25.4 47z" fill="url(#bg1)"/><path d="M25.4 1 L35.2 5 L35.2 42.2 L25.4 47z" fill="url(#bg2)"/><path d="M24.2 1.4 L25.6 1 L25.6 47 L24.2 46.8z" fill="#f4f8fa"/><path d="M1.2 9.2 L1.2 43.0" stroke="#eef3f5" stroke-width="1"/><path d="M2.0 12.20 l1.7 -0.30 v1.50 l-1.7 0.30 z" fill="#3eb0f2"/><path d="M2.0 14.86 l1.7 -0.30 v1.50 l-1.7 0.30 z" fill="#1e9ae8"/><path d="M2.0 17.52 l1.7 -0.30 v1.50 l-1.7 0.30 z" fill="#3eb0f2"/><path d="M2.0 20.18 l1.7 -0.30 v1.50 l-1.7 0.30 z" fill="#1e9ae8"/><path d="M2.0 22.84 l1.7 -0.30 v1.50 l-1.7 0.30 z" fill="#3eb0f2"/><path d="M2.0 25.50 l1.7 -0.30 v1.50 l-1.7 0.30 z" fill="#1e9ae8"/><path d="M2.0 28.16 l1.7 -0.30 v1.50 l-1.7 0.30 z" fill="#3eb0f2"/><path d="M2.0 30.82 l1.7 -0.30 v1.50 l-1.7 0.30 z" fill="#1e9ae8"/><path d="M2.0 33.48 l1.7 -0.30 v1.50 l-1.7 0.30 z" fill="#3eb0f2"/><path d="M2.0 36.14 l1.7 -0.30 v1.50 l-1.7 0.30 z" fill="#1e9ae8"/><path d="M2.0 38.80 l1.7 -0.30 v1.50 l-1.7 0.30 z" fill="#3eb0f2"/><path d="M4.2 8.0 L4.2 43.6" stroke="#eef3f5" stroke-width="1"/><path d="M5.0 10.98 l1.8 -0.32 v1.60 l-1.8 0.32 z" fill="#1e9ae8"/><path d="M5.0 13.79 l1.8 -0.32 v1.60 l-1.8 0.32 z" fill="#3eb0f2"/><path d="M5.0 16.60 l1.8 -0.32 v1.60 l-1.8 0.32 z" fill="#1e9ae8"/><path d="M5.0 19.41 l1.8 -0.32 v1.60 l-1.8 0.32 z" fill="#3eb0f2"/><path d="M5.0 22.22 l1.8 -0.32 v1.60 l-1.8 0.32 z" fill="#1e9ae8"/><path d="M5.0 25.03 l1.8 -0.32 v1.60 l-1.8 0.32 z" fill="#3eb0f2"/><path d="M5.0 27.84 l1.8 -0.32 v1.60 l-1.8 0.32 z" fill="#1e9ae8"/><path d="M5.0 30.65 l1.8 -0.32 v1.60 l-1.8 0.32 z" fill="#3eb0f2"/><path d="M5.0 33.46 l1.8 -0.32 v1.60 l-1.8 0.32 z" fill="#1e9ae8"/><path d="M5.0 36.27 l1.8 -0.32 v1.60 l-1.8 0.32 z" fill="#3eb0f2"/><path d="M5.0 39.08 l1.8 -0.32 v1.60 l-1.8 0.32 z" fill="#1e9ae8"/><path d="M7.2 6.8 L7.2 44.2" stroke="#eef3f5" stroke-width="1"/><path d="M8.0 9.76 l2.0 -0.35 v1.70 l-2.0 0.35 z" fill="#3eb0f2"/><path d="M8.0 12.72 l2.0 -0.35 v1.70 l-2.0 0.35 z" fill="#1e9ae8"/><path d="M8.0 15.68 l2.0 -0.35 v1.70 l-2.0 0.35 z" fill="#3eb0f2"/><path d="M8.0 18.64 l2.0 -0.35 v1.70 l-2.0 0.35 z" fill="#1e9ae8"/><path d="M8.0 21.60 l2.0 -0.35 v1.70 l-2.0 0.35 z" fill="#3eb0f2"/><path d="M8.0 24.56 l2.0 -0.35 v1.70 l-2.0 0.35 z" fill="#1e9ae8"/><path d="M8.0 27.52 l2.0 -0.35 v1.70 l-2.0 0.35 z" fill="#3eb0f2"/><path d="M8.0 30.48 l2.0 -0.35 v1.70 l-2.0 0.35 z" fill="#1e9ae8"/><path d="M8.0 33.44 l2.0 -0.35 v1.70 l-2.0 0.35 z" fill="#3eb0f2"/><path d="M8.0 36.40 l2.0 -0.35 v1.70 l-2.0 0.35 z" fill="#1e9ae8"/><path d="M8.0 39.36 l2.0 -0.35 v1.70 l-2.0 0.35 z" fill="#3eb0f2"/><path d="M11.0 5.5 L11.0 44.8" stroke="#eef3f5" stroke-width="1"/><path d="M11.8 8.54 l2.3 -0.40 v1.80 l-2.3 0.40 z" fill="#1e9ae8"/><path d="M11.8 11.65 l2.3 -0.40 v1.80 l-2.3 0.40 z" fill="#3eb0f2"/><path d="M11.8 14.76 l2.3 -0.40 v1.80 l-2.3 0.40 z" fill="#1e9ae8"/><path d="M11.8 17.87 l2.3 -0.40 v1.80 l-2.3 0.40 z" fill="#3eb0f2"/><path d="M11.8 20.98 l2.3 -0.40 v1.80 l-2.3 0.40 z" fill="#1e9ae8"/><path d="M11.8 24.09 l2.3 -0.40 v1.80 l-2.3 0.40 z" fill="#3eb0f2"/><path d="M11.8 27.20 l2.3 -0.40 v1.80 l-2.3 0.40 z" fill="#1e9ae8"/><path d="M11.8 30.31 l2.3 -0.40 v1.80 l-2.3 0.40 z" fill="#3eb0f2"/><path d="M11.8 33.42 l2.3 -0.40 v1.80 l-2.3 0.40 z" fill="#1e9ae8"/><path d="M11.8 36.53 l2.3 -0.40 v1.80 l-2.3 0.40 z" fill="#3eb0f2"/><path d="M11.8 39.64 l2.3 -0.40 v1.80 l-2.3 0.40 z" fill="#1e9ae8"/><path d="M15.0 4.3 L15.0 45.4" stroke="#eef3f5" stroke-width="1"/><path d="M15.8 7.32 l2.5 -0.44 v1.90 l-2.5 0.44 z" fill="#3eb0f2"/><path d="M15.8 10.58 l2.5 -0.44 v1.90 l-2.5 0.44 z" fill="#1e9ae8"/><path d="M15.8 13.84 l2.5 -0.44 v1.90 l-2.5 0.44 z" fill="#3eb0f2"/><path d="M15.8 17.10 l2.5 -0.44 v1.90 l-2.5 0.44 z" fill="#1e9ae8"/><path d="M15.8 20.36 l2.5 -0.44 v1.90 l-2.5 0.44 z" fill="#3eb0f2"/><path d="M15.8 23.62 l2.5 -0.44 v1.90 l-2.5 0.44 z" fill="#1e9ae8"/><path d="M15.8 26.88 l2.5 -0.44 v1.90 l-2.5 0.44 z" fill="#3eb0f2"/><path d="M15.8 30.14 l2.5 -0.44 v1.90 l-2.5 0.44 z" fill="#1e9ae8"/><path d="M15.8 33.40 l2.5 -0.44 v1.90 l-2.5 0.44 z" fill="#3eb0f2"/><path d="M15.8 36.66 l2.5 -0.44 v1.90 l-2.5 0.44 z" fill="#1e9ae8"/><path d="M15.8 39.92 l2.5 -0.44 v1.90 l-2.5 0.44 z" fill="#3eb0f2"/><path d="M19.4 3.1 L19.4 46.0" stroke="#eef3f5" stroke-width="1"/><path d="M20.2 6.10 l2.9 -0.51 v2.00 l-2.9 0.51 z" fill="#1e9ae8"/><path d="M20.2 9.51 l2.9 -0.51 v2.00 l-2.9 0.51 z" fill="#3eb0f2"/><path d="M20.2 12.92 l2.9 -0.51 v2.00 l-2.9 0.51 z" fill="#1e9ae8"/><path d="M20.2 16.33 l2.9 -0.51 v2.00 l-2.9 0.51 z" fill="#3eb0f2"/><path d="M20.2 19.74 l2.9 -0.51 v2.00 l-2.9 0.51 z" fill="#1e9ae8"/><path d="M20.2 23.15 l2.9 -0.51 v2.00 l-2.9 0.51 z" fill="#3eb0f2"/><path d="M20.2 26.56 l2.9 -0.51 v2.00 l-2.9 0.51 z" fill="#1e9ae8"/><path d="M20.2 29.97 l2.9 -0.51 v2.00 l-2.9 0.51 z" fill="#3eb0f2"/><path d="M20.2 33.38 l2.9 -0.51 v2.00 l-2.9 0.51 z" fill="#1e9ae8"/><path d="M20.2 36.79 l2.9 -0.51 v2.00 l-2.9 0.51 z" fill="#3eb0f2"/><path d="M20.2 40.20 l2.9 -0.51 v2.00 l-2.9 0.51 z" fill="#1e9ae8"/><path d="M3.8 6.8 L19 1.6 L19 4.2 L3.8 9.4z" fill="#18a8f0"/><path d="M3.8 6.8 L19 1.6 L19 2.4 L3.8 7.6z" fill="#6ad0ff"/><path d="M6.5 41.2 L14.5 42.4 L14.5 43.6 L6.5 42.4z" fill="#6a767c"/><path d="M8 42.6 L13 43.4 L13 44.6 L8 43.8z" fill="#8a969c"/></svg>
<div class="t" style="left:270px;top:76px;font-size:16px;line-height:20px;color:#0a246a;letter-spacing:1px;-webkit-text-stroke:0.3px">Accommodation Search Results<br><span style="letter-spacing:0.8px">For pax: 2A, 0C, 0I</span></div>
<svg style="left:1243px;top:86px" width="12" height="10" viewBox="0 0 12 10"><path d="M0.4 0.6h10.4l-1 3 -4.2 5.6 -4.2-5.6z" fill="#848484"/><rect x="6.6" y="1.4" width="1.6" height="1.6" fill="#e8e8e8"/></svg><svg style="left:1278px;top:86px" width="9" height="9" viewBox="0 0 9 9"><rect x="0.4" y="0.4" width="8" height="8" fill="#848484"/><rect x="1.4" y="1.2" width="1.6" height="2" fill="#e8e8e8"/></svg><svg style="left:1332px;top:83px" width="14" height="16" viewBox="0 0 14 16"><ellipse cx="7" cy="2.6" rx="6" ry="2.2" fill="#d8d8d8" stroke="#9a9a9a" stroke-width="0.8"/><path d="M1.2 3.2 L6 10 L6 15.4 L8 14 L8 10 L12.8 3.2 C10 5 4 5 1.2 3.2z" fill="#b8b8b8"/><path d="M6 5.2l1 5v4.6" stroke="#f4f4f4" stroke-width="1" fill="none"/></svg><svg style="left:1398px;top:82px" width="17" height="17" viewBox="0 0 17 17"><path d="M1 3.5H15M1.4 3.5L3.4 9.5H15M14.6 3.5V9.5" fill="none" stroke="#707070" stroke-width="1"/><path d="M3.6 4v3.4M5.5 4v5.5M7.5 4v5.5M9.5 4v5.5M11.5 4v5.5M13 4v5.5" stroke="#707070" stroke-width="1"/><path d="M12.5 3.5V1.4H16" stroke="#707070" stroke-width="1" fill="none"/><path d="M10.6 10L9.2 13.4" stroke="#707070" stroke-width="1"/><path d="M4.6 14.6H7.6" stroke="#6a9898" stroke-width="1"/><circle cx="3" cy="14.8" r="1.5" fill="#fff" stroke="#f01414" stroke-width="1.2"/><circle cx="9.2" cy="14.8" r="1.5" fill="#fff" stroke="#f01414" stroke-width="1.2"/></svg><svg style="left:1450px;top:83px" width="17" height="16" viewBox="0 0 17 16"><text x="6.4" y="13" font-family="Liberation Sans" font-weight="bold" font-size="17" text-anchor="middle" fill="#86b432" stroke="#6a9a22" stroke-width="0.7" style="letter-spacing:0">$</text><rect x="1" y="10.2" width="4.6" height="3" fill="#f01020"/><rect x="2" y="11.3" width="2.4" height="0.9" fill="#ffd8d8"/><text x="10.6" y="15" font-family="Liberation Sans" font-weight="bold" font-size="12.5" text-anchor="middle" fill="#f01020" stroke="#f01020" stroke-width="0.5" style="letter-spacing:0">%</text></svg><svg style="left:1513px;top:82px" width="18" height="18" viewBox="0 0 18 18"><path d="M1.6 2.2l3 3M16.6 16.2l-3-3" stroke="#8a5a20" stroke-width="2.4" stroke-linecap="round"/><circle cx="9.2" cy="8.9" r="6.3" fill="#e8eef4" stroke="#7a94b0" stroke-width="1.3"/><path d="M4.2 12.6 A6.3 6.3 0 0 0 14.8 11.8" fill="none" stroke="#58c8e8" stroke-width="1.4"/><path d="M3.2 7.6 A6.3 6.3 0 0 1 7.4 2.9" fill="none" stroke="#3a7ad0" stroke-width="1.4"/><path d="M5.4 4.6 L10.6 7.8 L8 10.2z" fill="#2a86e8"/><path d="M13.2 13.2 L8 10.2 L10.6 7.8z" fill="#f02818"/></svg><svg style="left:1561px;top:84.4px" width="13" height="13" viewBox="0 0 13 13"><path d="M2.6 2.6L10.4 10.4M10.4 2.6L2.6 10.4" stroke="#c42030" stroke-width="3.8" stroke-linecap="round"/><path d="M2.6 2.6L10.4 10.4M10.4 2.6L2.6 10.4" stroke="#f04858" stroke-width="2.2" stroke-linecap="round"/><path d="M3 3L10 10M10 3L3 10" stroke="#f87080" stroke-width="0.8" stroke-linecap="round"/></svg>
<div class="t" style="left:1237px;top:101px;letter-spacing:-0.265px;color:#8a8a8a;text-shadow:1px 1px 0 #fff;">More</div>
<div class="t" style="left:1271px;top:101px;letter-spacing:-0.157px;color:#8a8a8a;text-shadow:1px 1px 0 #fff;">Stop</div>
<div class="t" style="left:1304px;top:101px;letter-spacing:-0.193px;color:#000;">Facilities Filter</div>
<div class="t" style="left:1390px;top:101px;letter-spacing:-0.271px;color:#000;">Basket</div>
<div class="t" style="left:1433px;top:101px;letter-spacing:-0.129px;color:#000;">Nett Price</div>
<div class="t" style="left:1499px;top:101px;letter-spacing:-0.177px;color:#000;">Navigate</div>
<div class="t" style="left:1553px;top:101px;letter-spacing:-0.425px;color:#000;">Close</div>
<div class="a" style="left:1381px;top:82px;width:1px;height:32px;background:#808080"></div><div class="a" style="left:1382px;top:82px;width:1px;height:32px;background:#fff"></div>
<div class="a" style="left:1490px;top:82px;width:1px;height:32px;background:#808080"></div><div class="a" style="left:1491px;top:82px;width:1px;height:32px;background:#fff"></div>
<div class="t b" style="left:212px;top:136px;letter-spacing:0.619px;">Search results: 2105/2105</div>
<div class="a" style="left:213px;top:151px;width:1378px;height:607px;border-top:1px solid #808080;border-left:1px solid #808080;border-right:1px solid #fff;border-bottom:1px solid #fff"></div>
<div class="a" style="left:214px;top:152px;width:1376px;height:605px;border-top:1px solid #404040;border-left:1px solid #404040;border-right:1px solid #d4d0c8;border-bottom:1px solid #d4d0c8;background:#fff"></div>
<div class="h" style="left:215px;width:75px;letter-spacing:-0.066px;">Resort</div>
<div class="h" style="left:290px;width:120px;letter-spacing:-0.298px;">Accommodation</div>
<div class="h" style="left:410px;width:40px;letter-spacing:-0.14px;">Rati<i>...</i></div>
<div class="h" style="left:450px;width:75px;letter-spacing:-0.271px;">Board</div>
<div class="h" style="left:525px;width:90px;letter-spacing:-0.243px;">Room type</div>
<div class="h" style="left:615px;width:35px;letter-spacing:-0.627px;">DOW</div>
<div class="h" style="left:650px;width:68px;letter-spacing:-0.176px;">Check In</div>
<div class="h" style="left:718px;width:35px;letter-spacing:-0.627px;">DOW</div>
<div class="h" style="left:753px;width:68px;letter-spacing:-0.218px;">Check Out</div>
<div class="h" style="left:821px;width:63px;letter-spacing:-0.295px;">Supplier</div>
<div class="h ct" style="left:884px;width:25px;letter-spacing:-0.5px;">Er</div>
<div class="h ct" style="left:909px;width:25px;letter-spacing:-0.944px;">NR</div>
<div class="h ct" style="left:934px;width:25px;letter-spacing:-1.25px;">MS</div>
<div class="h rt" style="left:959px;width:55px;letter-spacing:-0.412px;">Price</div>
<div class="h rt" style="left:1014px;width:55px;letter-spacing:-0.207px;">Incl.Fl.PP</div>
<div class="h rt" style="left:1069px;width:65px;letter-spacing:-0.271px;padding-right:10px;">Basket</div>
<div class="h rt" style="left:1134px;width:55px;letter-spacing:-0.225px;">Discount</div>
<div class="h ct" style="left:1189px;width:25px;letter-spacing:0.194px;">Of</div>
<div class="h" style="left:1214px;width:60px;letter-spacing:0.053px;">Contract</div>
<div class="h" style="left:1274px;width:75px;letter-spacing:-0.105px;">Act. Supplier</div>
<div class="h" style="left:1349px;width:223px;border-right:none"></div>
<svg style="left:1124px;top:160px" width="8" height="5"><path d="M0 0h7l-3.5 4z" fill="#8e8e8e"/></svg>
<div id="tb">
<div class="r w" style="top:0px"></div>
<div class="r" style="top:0px;width:1134px">
<div class="c k0 c0">Downtown <i>...</i></div>
<div class="c k1 c1">Golden Gate Hotel an<i>...</i></div>
<div class="c k2 c2">3.0</div>
<div class="c k3 c3">Room Only</div>
<div class="c k4 c4">Double Standard</div>
<div class="c k5 c5">Tue</div>
<div class="c k6 c6">08/08/2017</div>
<div class="c k7 c7">Fri</div>
<div class="c k6 c8">11/08/2017</div>
<div class="c k8 c9">Get A Bed</div>
<div class="c ct k9 c10">*</div>
<div class="c ct c11"></div>
<div class="c ct c12"></div>
<div class="c rt k6 c13">44.33</div>
<div class="c rt k6 c14">22.17</div>
<div class="c rt k6 c15">44.33</div>
<div class="c rt k10 c16">0.00</div>
<div class="c ct c17"></div>
<div class="c k11 c18">XML</div>
<div class="c c19"></div>
</div>
<div class="r w" style="top:15px"></div>
<div class="r" style="top:15px;width:1134px">
<div class="c k12 c0">Las Vegas T<i>...</i></div>
<div class="c k13 c1">The D Hotel</div>
<div class="c k2 c2">4.0</div>
<div class="c k3 c3">Room Only</div>
<div class="c k14 c4">Double Deluxe</div>
<div class="c k5 c5">Tue</div>
<div class="c k6 c6">08/08/2017</div>
<div class="c k7 c7">Fri</div>
<div class="c k6 c8">11/08/2017</div>
<div class="c k8 c9">Get A Bed</div>
<div class="c ct k9 c10">*</div>
<div class="c ct c11"></div>
<div class="c ct c12"></div>
<div class="c rt k6 c13">59.18</div>
<div class="c rt k6 c14">29.59</div>
<div class="c rt k6 c15">59.18</div>
<div class="c rt k10 c16">0.00</div>
<div class="c ct c17"></div>
<div class="c k11 c18">XML</div>
<div class="c c19"></div>
</div>
<div class="r w" style="top:30px"></div>
<div class="r" style="top:30px;width:1134px">
<div class="c k15 c0">Fremont Str<i>...</i></div>
<div class="c k1 c1">Golden Gate Hotel an<i>...</i></div>
<div class="c k16 c2">2*</div>
<div class="c k17 c3">Roomonly</div>
<div class="c k18 c4">Standard, Que<i>...</i></div>
<div class="c k5 c5">Tue</div>
<div class="c k6 c6">08/08/2017</div>
<div class="c k7 c7">Fri</div>
<div class="c k6 c8">11/08/2017</div>
<div class="c k19 c9">Tourico <i>...</i></div>
<div class="c ct c10"></div>
<div class="c ct c11"></div>
<div class="c ct c12"></div>
<div class="c rt k6 c13">82.29</div>
<div class="c rt k6 c14">41.15</div>
<div class="c rt k6 c15">82.29</div>
<div class="c rt k10 c16">0.00</div>
<div class="c ct c17"></div>
<div class="c k11 c18">XML</div>
<div class="c c19"></div>
</div>
<div class="r w" style="top:45px"></div>
<div class="r" style="top:45px;width:1134px">
<div class="c k15 c0">Fremont Str<i>...</i></div>
<div class="c k20 c1">Plaza Hotel &amp; Casino</div>
<div class="c k16 c2">3*</div>
<div class="c k17 c3">Roomonly</div>
<div class="c k21 c4">Deluxe</div>
<div class="c k5 c5">Tue</div>
<div class="c k6 c6">08/08/2017</div>
<div class="c k7 c7">Fri</div>
<div class="c k6 c8">11/08/2017</div>
<div class="c k19 c9">Tourico <i>...</i></div>
<div class="c ct c10"></div>
<div class="c ct c11"></div>
<div class="c ct c12"></div>
<div class="c rt k6 c13">83.10</div>
<div class="c rt k6 c14">41.55</div>
<div class="c rt k6 c15">83.10</div>
<div class="c rt k10 c16">0.00</div>
<div class="c ct c17"></div>
<div class="c k11 c18">XML</div>
<div class="c c19"></div>
</div>
<div class="r w" style="top:60px"></div>
<div class="r" style="top:60px;width:1134px">
<div class="c k22 c0">Las Vegas (<i>...</i></div>
<div class="c k23 c1">El Cortez Hotel &amp; Cas<i>...</i></div>
<div class="c k16 c2">3*</div>
<div class="c k17 c3">Roomonly</div>
<div class="c k24 c4">Standard, Pavi<i>...</i></div>
<div class="c k5 c5">Tue</div>
<div class="c k6 c6">08/08/2017</div>
<div class="c k7 c7">Fri</div>
<div class="c k6 c8">11/08/2017</div>
<div class="c k19 c9">Tourico <i>...</i></div>
<div class="c ct k9 c10">*</div>
<div class="c ct c11"></div>
<div class="c ct c12"></div>
<div class="c rt k6 c13">84.64</div>
<div class="c rt k6 c14">42.32</div>
<div class="c rt k6 c15">84.64</div>
<div class="c rt k10 c16">0.00</div>
<div class="c ct c17"></div>
<div class="c k11 c18">XML</div>
<div class="c c19"></div>
</div>
<div class="r w" style="top:75px"></div>
<div class="r" style="top:75px;width:1134px">
<div class="c k22 c0">Las Vegas (<i>...</i></div>
<div class="c k25 c1">Oasis at Gold Spike</div>
<div class="c k16 c2">3*</div>
<div class="c k17 c3">Roomonly</div>
<div class="c k26 c4">Standard</div>
<div class="c k5 c5">Tue</div>
<div class="c k6 c6">08/08/2017</div>
<div class="c k7 c7">Fri</div>
<div class="c k6 c8">11/08/2017</div>
<div class="c k19 c9">Tourico <i>...</i></div>
<div class="c ct c10"></div>
<div class="c ct c11"></div>
<div class="c ct c12"></div>
<div class="c rt k6 c13">85.42</div>
<div class="c rt k6 c14">42.71</div>
<div class="c rt k6 c15">85.42</div>
<div class="c rt k10 c16">0.00</div>
<div class="c ct c17"></div>
<div class="c k11 c18">XML</div>
<div class="c c19"></div>
</div>
<div class="r w" style="top:90px"></div>
<div class="r" style="top:90px;width:1134px">
<div class="c k12 c0">Las Vegas T<i>...</i></div>
<div class="c k27 c1">Mardi Gras Hotel &amp; C<i>...</i></div>
<div class="c k2 c2">3.0</div>
<div class="c k3 c3">Room Only</div>
<div class="c k28 c4">Breakfast Inclu<i>...</i></div>
<div class="c k5 c5">Tue</div>
<div class="c k6 c6">08/08/2017</div>
<div class="c k7 c7">Fri</div>
<div class="c k6 c8">11/08/2017</div>
<div class="c k8 c9">Get A Bed</div>
<div class="c ct k9 c10">*</div>
<div class="c ct c11"></div>
<div class="c ct c12"></div>
<div class="c rt k6 c13">86.47</div>
<div class="c rt k6 c14">43.24</div>
<div class="c rt k6 c15">86.47</div>
<div class="c rt k10 c16">0.00</div>
<div class="c ct c17"></div>
<div class="c k11 c18">XML</div>
<div class="c c19"></div>
</div>
<div class="r w" style="top:105px"></div>
<div class="r" style="top:105px;width:1134px">
<div class="c k12 c0">Las Vegas T<i>...</i></div>
<div class="c k27 c1">Mardi Gras Hotel &amp; C<i>...</i></div>
<div class="c k2 c2">3.0</div>
<div class="c k3 c3">Room Only</div>
<div class="c k29 c4">Standard Room</div>
<div class="c k5 c5">Tue</div>
<div class="c k6 c6">08/08/2017</div>
<div class="c k7 c7">Fri</div>
<div class="c k6 c8">11/08/2017</div>
<div class="c k8 c9">Get A Bed</div>
<div class="c ct k9 c10">*</div>
<div class="c ct c11"></div>
<div class="c ct c12"></div>
<div class="c rt k6 c13">86.47</div>
<div class="c rt k6 c14">43.24</div>
<div class="c rt k6 c15">86.47</div>
<div class="c rt k10 c16">0.00</div>
<div class="c ct c17"></div>
<div class="c k11 c18">XML</div>
<div class="c c19"></div>
</div>
<div class="r w" style="top:120px"></div>
<div class="r" style="top:120px;width:1134px">
<div class="c k0 c0">Downtown <i>...</i></div>
<div class="c k30 c1">Four Queens Hotel &amp;<i>...</i></div>
<div class="c k2 c2">3.0</div>
<div class="c k3 c3">Room Only</div>
<div class="c k4 c4">Double Standard</div>
<div class="c k5 c5">Tue</div>
<div class="c k6 c6">08/08/2017</div>
<div class="c k7 c7">Fri</div>
<div class="c k6 c8">11/08/2017</div>
<div class="c k8 c9">Get A Bed</div>
<div class="c ct k9 c10">*</div>
<div class="c ct c11"></div>
<div class="c ct c12"></div>
<div class="c rt k6 c13">86.99</div>
<div class="c rt k6 c14">43.50</div>
<div class="c rt k6 c15">86.99</div>
<div class="c rt k10 c16">0.00</div>
<div class="c ct c17"></div>
<div class="c k11 c18">XML</div>
<div class="c c19"></div>
</div>
<div class="r w" style="top:135px"></div>
<div class="r" style="top:135px;width:1134px">
<div class="c k0 c0">Downtown <i>...</i></div>
<div class="c k20 c1">Plaza Hotel &amp; Casino</div>
<div class="c k2 c2">3.0</div>
<div class="c k3 c3">Room Only</div>
<div class="c k31 c4">Deluxe - 1 Bed</div>
<div class="c k5 c5">Tue</div>
<div class="c k6 c6">08/08/2017</div>
<div class="c k7 c7">Fri</div>
<div class="c k6 c8">11/08/2017</div>
<div class="c k8 c9">Get A Bed</div>
<div class="c ct k9 c10">*</div>
<div class="c ct c11"></div>
<div class="c ct c12"></div>
<div class="c rt k6 c13">87.44</div>
<div class="c rt k6 c14">43.72</div>
<div class="c rt k6 c15">87.44</div>
<div class="c rt k10 c16">0.00</div>
<div class="c ct c17"></div>
<div class="c k11 c18">XML</div>
<div class="c c19"></div>
</div>
<div class="r w" style="top:150px"></div>
<div class="r" style="top:150px;width:1134px">
<div class="c k0 c0">Downtown <i>...</i></div>
<div class="c k32 c1">El Cortez Hotel And <i>...</i></div>
<div class="c k2 c2">3.0</div>
<div class="c k3 c3">Room Only</div>
<div class="c k33 c4">Pavilion - 1 Bed</div>
<div class="c k5 c5">Tue</div>
<div class="c k6 c6">08/08/2017</div>
<div class="c k7 c7">Fri</div>
<div class="c k6 c8">11/08/2017</div>
<div class="c k8 c9">Get A Bed</div>
<div class="c ct k9 c10">*</div>
<div class="c ct c11"></div>
<div class="c ct c12"></div>
<div class="c rt k6 c13">89.29</div>
<div class="c rt k6 c14">44.65</div>
<div class="c rt k6 c15">89.29</div>
<div class="c rt k10 c16">0.00</div>
<div class="c ct c17"></div>
<div class="c k11 c18">XML</div>
<div class="c c19"></div>
</div>
<div class="r w" style="top:165px"></div>
<div class="r" style="top:165px;width:1134px">
<div class="c k0 c0">Downtown <i>...</i></div>
<div class="c k32 c1">El Cortez Hotel And <i>...</i></div>
<div class="c k2 c2">3.0</div>
<div class="c k3 c3">Room Only</div>
<div class="c k34 c4">Pavilion - 2 Beds</div>
<div class="c k5 c5">Tue</div>
<div class="c k6 c6">08/08/2017</div>
<div class="c k7 c7">Fri</div>
<div class="c k6 c8">11/08/2017</div>
<div class="c k8 c9">Get A Bed</div>
<div class="c ct k9 c10">*</div>
<div class="c ct c11"></div>
<div class="c ct c12"></div>
<div class="c rt k6 c13">89.29</div>
<div class="c rt k6 c14">44.65</div>
<div class="c rt k6 c15">89.29</div>
<div class="c rt k10 c16">0.00</div>
<div class="c ct c17"></div>
<div class="c k11 c18">XML</div>
<div class="c c19"></div>
</div>
<div class="r w" style="top:180px"></div>
<div class="r" style="top:180px;width:1134px">
<div class="c k0 c0">Downtown <i>...</i></div>
<div class="c k35 c1">Gold Spike Hotel &amp; C<i>...</i></div>
<div class="c k2 c2">3.0</div>
<div class="c k3 c3">Room Only</div>
<div class="c k36 c4">Standard - 1 Bed</div>
<div class="c k5 c5">Tue</div>
<div class="c k6 c6">08/08/2017</div>
<div class="c k7 c7">Fri</div>
<div class="c k6 c8">11/08/2017</div>
<div class="c k8 c9">Get A Bed</div>
<div class="c ct k9 c10">*</div>
<div class="c ct c11"></div>
<div class="c ct c12"></div>
<div class="c rt k6 c13">89.88</div>
<div class="c rt k6 c14">44.94</div>
<div class="c rt k6 c15">89.88</div>
<div class="c rt k10 c16">0.00</div>
<div class="c ct c17"></div>
<div class="c k11 c18">XML</div>
<div class="c c19"></div>
</div>
<div class="r w" style="top:195px"></div>
<div class="r" style="top:195px;width:1134px">
<div class="c k37 c0">West Of Th<i>...</i></div>
<div class="c k38 c1">Palace Station</div>
<div class="c k39 c2">3.5*</div>
<div class="c k17 c3">Roomonly</div>
<div class="c k40 c4">Courtyard King</div>
<div class="c k5 c5">Tue</div>
<div class="c k6 c6">08/08/2017</div>
<div class="c k7 c7">Fri</div>
<div class="c k6 c8">11/08/2017</div>
<div class="c k19 c9">Tourico <i>...</i></div>
<div class="c ct k9 c10">*</div>
<div class="c ct c11"></div>
<div class="c ct c12"></div>
<div class="c rt k6 c13">89.90</div>
<div class="c rt k6 c14">44.95</div>
<div class="c rt k6 c15">89.90</div>
<div class="c rt k10 c16">0.00</div>
<div class="c ct c17"></div>
<div class="c k11 c18">XML</div>
<div class="c c19"></div>
</div>
<div class="r w" style="top:210px"></div>
<div class="r" style="top:210px;width:1134px">
<div class="c k37 c0">West Of Th<i>...</i></div>
<div class="c k38 c1">Palace Station</div>
<div class="c k39 c2">3.5*</div>
<div class="c k17 c3">Roomonly</div>
<div class="c k41 c4">Courtyard Run<i>...</i></div>
<div class="c k5 c5">Tue</div>
<div class="c k6 c6">08/08/2017</div>
<div class="c k7 c7">Fri</div>
<div class="c k6 c8">11/08/2017</div>
<div class="c k19 c9">Tourico <i>...</i></div>
<div class="c ct k9 c10">*</div>
<div class="c ct c11"></div>
<div class="c ct c12"></div>
<div class="c rt k6 c13">89.90</div>
<div class="c rt k6 c14">44.95</div>
<div class="c rt k6 c15">89.90</div>
<div class="c rt k10 c16">0.00</div>
<div class="c ct c17"></div>
<div class="c k11 c18">XML</div>
<div class="c c19"></div>
</div>
<div class="r w" style="top:225px"></div>
<div class="r" style="top:225px;width:1134px">
<div class="c k37 c0">West Of Th<i>...</i></div>
<div class="c k38 c1">Palace Station</div>
<div class="c k39 c2">3.5*</div>
<div class="c k17 c3">Roomonly</div>
<div class="c k42 c4">Courtyard Two<i>...</i></div>
<div class="c k5 c5">Tue</div>
<div class="c k6 c6">08/08/2017</div>
<div class="c k7 c7">Fri</div>
<div class="c k6 c8">11/08/2017</div>
<div class="c k19 c9">Tourico <i>...</i></div>
<div class="c ct k9 c10">*</div>
<div class="c ct c11"></div>
<div class="c ct c12"></div>
<div class="c rt k6 c13">89.90</div>
<div class="c rt k6 c14">44.95</div>
<div class="c rt k6 c15">89.90</div>
<div class="c rt k10 c16">0.00</div>
<div class="c ct c17"></div>
<div class="c k11 c18">XML</div>
<div class="c c19"></div>
</div>
<div class="r w" style="top:240px"></div>
<div class="r" style="top:240px;width:1134px">
<div class="c k37 c0">West Of Th<i>...</i></div>
<div class="c k23 c1">Days Inn Wild Wild W<i>...</i></div>
<div class="c k16 c2">2*</div>
<div class="c k17 c3">Roomonly</div>
<div class="c k43 c4">Standard, Leis<i>...</i></div>
<div class="c k5 c5">Tue</div>
<div class="c k6 c6">08/08/2017</div>
<div class="c k7 c7">Fri</div>
<div class="c k6 c8">11/08/2017</div>
<div class="c k19 c9">Tourico <i>...</i></div>
<div class="c ct k9 c10">*</div>
<div class="c ct c11"></div>
<div class="c ct c12"></div>
<div class="c rt k6 c13">90.42</div>
<div class="c rt k6 c14">45.21</div>
<div class="c rt k6 c15">90.42</div>
<div class="c rt k10 c16">0.00</div>
<div class="c ct c17"></div>
<div class="c k11 c18">XML</div>
<div class="c c19"></div>
</div>
<div class="r w" style="top:255px"></div>
<div class="r" style="top:255px;width:1134px">
<div class="c k0 c0">Downtown <i>...</i></div>
<div class="c k44 c1">Stratosphere</div>
<div class="c k2 c2">3.0</div>
<div class="c k3 c3">Room Only</div>
<div class="c k45 c4">Double Or Twi<i>...</i></div>
<div class="c k5 c5">Tue</div>
<div class="c k6 c6">08/08/2017</div>
<div class="c k7 c7">Fri</div>
<div class="c k6 c8">11/08/2017</div>
<div class="c k8 c9">Get A Bed</div>
<div class="c ct k9 c10">*</div>
<div class="c ct c11"></div>
<div class="c ct c12"></div>
<div class="c rt k6 c13">91.45</div>
<div class="c rt k6 c14">45.73</div>
<div class="c rt k6 c15">91.45</div>
<div class="c rt k10 c16">0.00</div>
<div class="c ct c17"></div>
<div class="c k11 c18">XML</div>
<div class="c c19"></div>
</div>
<div class="r w" style="top:270px"></div>
<div class="r" style="top:270px;width:1134px">
<div class="c k12 c0">Las Vegas T<i>...</i></div>
<div class="c k46 c1">Americas Best Value <i>...</i></div>
<div class="c k16 c2">2*</div>
<div class="c k17 c3">Roomonly</div>
<div class="c k26 c4">Standard</div>
<div class="c k5 c5">Tue</div>
<div class="c k6 c6">08/08/2017</div>
<div class="c k7 c7">Fri</div>
<div class="c k6 c8">11/08/2017</div>
<div class="c k19 c9">Tourico <i>...</i></div>
<div class="c ct c10"></div>
<div class="c ct c11"></div>
<div class="c ct c12"></div>
<div class="c rt k6 c13">91.88</div>
<div class="c rt k6 c14">45.94</div>
<div class="c rt k6 c15">91.88</div>
<div class="c rt k10 c16">0.00</div>
<div class="c ct c17"></div>
<div class="c k11 c18">XML</div>
<div class="c c19"></div>
</div>
<div class="r w" style="top:285px"></div>
<div class="r" style="top:285px;width:1134px">
<div class="c k22 c0">Las Vegas (<i>...</i></div>
<div class="c k47 c1">Fiesta Rancho</div>
<div class="c k16 c2">3*</div>
<div class="c k17 c3">Roomonly</div>
<div class="c k48 c4">Standard King</div>
<div class="c k5 c5">Tue</div>
<div class="c k6 c6">08/08/2017</div>
<div class="c k7 c7">Fri</div>
<div class="c k6 c8">11/08/2017</div>
<div class="c k19 c9">Tourico <i>...</i></div>
<div class="c ct k9 c10">*</div>
<div class="c ct c11"></div>
<div class="c ct c12"></div>
<div class="c rt k6 c13">93.33</div>
<div class="c rt k6 c14">46.67</div>
<div class="c rt k6 c15">93.33</div>
<div class="c rt k10 c16">0.00</div>
<div class="c ct c17"></div>
<div class="c k11 c18">XML</div>
<div class="c c19"></div>
</div>
<div class="r w" style="top:300px"></div>
<div class="r" style="top:300px;width:1134px">
<div class="c k22 c0">Las Vegas (<i>...</i></div>
<div class="c k47 c1">Fiesta Rancho</div>
<div class="c k16 c2">3*</div>
<div class="c k17 c3">Roomonly</div>
<div class="c k41 c4">Standard Two <i>...</i></div>
<div class="c k5 c5">Tue</div>
<div class="c k6 c6">08/08/2017</div>
<div class="c k7 c7">Fri</div>
<div class="c k6 c8">11/08/2017</div>
<div class="c k19 c9">Tourico <i>...</i></div>
<div class="c ct k9 c10">*</div>
<div class="c ct c11"></div>
<div class="c ct c12"></div>
<div class="c rt k6 c13">93.33</div>
<div class="c rt k6 c14">46.67</div>
<div class="c rt k6 c15">93.33</div>
<div class="c rt k10 c16">0.00</div>
<div class="c ct c17"></div>
<div class="c k11 c18">XML</div>
<div class="c c19"></div>
</div>
<div class="r w" style="top:315px"></div>
<div class="r" style="top:315px;width:1134px">
<div class="c k12 c0">Las Vegas T<i>...</i></div>
<div class="c k49 c1">America's Best Value <i>...</i></div>
<div class="c k2 c2">2.0</div>
<div class="c k3 c3">Room Only</div>
<div class="c k50 c4">Double Guest <i>...</i></div>
<div class="c k5 c5">Tue</div>
<div class="c k6 c6">08/08/2017</div>
<div class="c k7 c7">Fri</div>
<div class="c k6 c8">11/08/2017</div>
<div class="c k8 c9">Get A Bed</div>
<div class="c ct k9 c10">*</div>
<div class="c ct c11"></div>
<div class="c ct c12"></div>
<div class="c rt k6 c13">93.56</div>
<div class="c rt k6 c14">46.78</div>
<div class="c rt k6 c15">93.56</div>
<div class="c rt k10 c16">0.00</div>
<div class="c ct c17"></div>
<div class="c k11 c18">XML</div>
<div class="c c19"></div>
</div>
<div class="r w" style="top:330px"></div>
<div class="r" style="top:330px;width:1134px">
<div class="c k51 c0">West Las V<i>...</i></div>
<div class="c k52 c1">Palace Station Hotel <i>...</i></div>
<div class="c k2 c2">3.0</div>
<div class="c k3 c3">Room Only</div>
<div class="c k40 c4">Courtyard King<i>...</i></div>
<div class="c k5 c5">Tue</div>
<div class="c k6 c6">08/08/2017</div>
<div class="c k7 c7">Fri</div>
<div class="c k6 c8">11/08/2017</div>
<div class="c k8 c9">Get A Bed</div>
<div class="c ct k9 c10">*</div>
<div class="c ct c11"></div>
<div class="c ct c12"></div>
<div class="c rt k6 c13">94.59</div>
<div class="c rt k6 c14">47.30</div>
<div class="c rt k6 c15">94.59</div>
<div class="c rt k10 c16">0.00</div>
<div class="c ct c17"></div>
<div class="c k11 c18">XML</div>
<div class="c c19"></div>
</div>
<div class="r w" style="top:345px"></div>
<div class="r" style="top:345px;width:1134px">
<div class="c k51 c0">West Las V<i>...</i></div>
<div class="c k52 c1">Palace Station Hotel <i>...</i></div>
<div class="c k2 c2">3.0</div>
<div class="c k3 c3">Room Only</div>
<div class="c k41 c4">Courtyard Run<i>...</i></div>
<div class="c k5 c5">Tue</div>
<div class="c k6 c6">08/08/2017</div>
<div class="c k7 c7">Fri</div>
<div class="c k6 c8">11/08/2017</div>
<div class="c k8 c9">Get A Bed</div>
<div class="c ct k9 c10">*</div>
<div class="c ct c11"></div>
<div class="c ct c12"></div>
<div class="c rt k6 c13">94.59</div>
<div class="c rt k6 c14">47.30</div>
<div class="c rt k6 c15">94.59</div>
<div class="c rt k10 c16">0.00</div>
<div class="c ct c17"></div>
<div class="c k11 c18">XML</div>
<div class="c c19"></div>
</div>
<div class="r w" style="top:360px"></div>
<div class="r" style="top:360px;width:1134px">
<div class="c k51 c0">West Las V<i>...</i></div>
<div class="c k52 c1">Palace Station Hotel <i>...</i></div>
<div class="c k2 c2">3.0</div>
<div class="c k3 c3">Room Only</div>
<div class="c k42 c4">Courtyard Two<i>...</i></div>
<div class="c k5 c5">Tue</div>
<div class="c k6 c6">08/08/2017</div>
<div class="c k7 c7">Fri</div>
<div class="c k6 c8">11/08/2017</div>
<div class="c k8 c9">Get A Bed</div>
<div class="c ct k9 c10">*</div>
<div class="c ct c11"></div>
<div class="c ct c12"></div>
<div class="c rt k6 c13">94.59</div>
<div class="c rt k6 c14">47.30</div>
<div class="c rt k6 c15">94.59</div>
<div class="c rt k10 c16">0.00</div>
<div class="c ct c17"></div>
<div class="c k11 c18">XML</div>
<div class="c c19"></div>
</div>
<div class="r w" style="top:375px"></div>
<div class="r" style="top:375px;width:1134px">
<div class="c k12 c0">Las Vegas T<i>...</i></div>
<div class="c k53 c1">Days Inn Las Vegas <i>...</i></div>
<div class="c k2 c2">2.0</div>
<div class="c k3 c3">Room Only</div>
<div class="c k54 c4">Leisure - 1 Bed</div>
<div class="c k5 c5">Tue</div>
<div class="c k6 c6">08/08/2017</div>
<div class="c k7 c7">Fri</div>
<div class="c k6 c8">11/08/2017</div>
<div class="c k8 c9">Get A Bed</div>
<div class="c ct k9 c10">*</div>
<div class="c ct c11"></div>
<div class="c ct c12"></div>
<div class="c rt k6 c13">95.37</div>
<div class="c rt k6 c14">47.69</div>
<div class="c rt k6 c15">95.37</div>
<div class="c rt k10 c16">0.00</div>
<div class="c ct c17"></div>
<div class="c k11 c18">XML</div>
<div class="c c19"></div>
</div>
<div class="r w" style="top:390px"></div>
<div class="r" style="top:390px;width:1134px">
<div class="c k12 c0">Las Vegas T<i>...</i></div>
<div class="c k53 c1">Days Inn Las Vegas <i>...</i></div>
<div class="c k2 c2">2.0</div>
<div class="c k3 c3">Room Only</div>
<div class="c k55 c4">Leisure - 2 Beds</div>
<div class="c k5 c5">Tue</div>
<div class="c k6 c6">08/08/2017</div>
<div class="c k7 c7">Fri</div>
<div class="c k6 c8">11/08/2017</div>
<div class="c k8 c9">Get A Bed</div>
<div class="c ct k9 c10">*</div>
<div class="c ct c11"></div>
<div class="c ct c12"></div>
<div class="c rt k6 c13">95.37</div>
<div class="c rt k6 c14">47.69</div>
<div class="c rt k6 c15">95.37</div>
<div class="c rt k10 c16">0.00</div>
<div class="c ct c17"></div>
<div class="c k11 c18">XML</div>
<div class="c c19"></div>
</div>
<div class="r w" style="top:405px"></div>
<div class="r" style="top:405px;width:1134px">
<div class="c k22 c0">Las Vegas (<i>...</i></div>
<div class="c k56 c1">Circus Circus Hotel, <i>...</i></div>
<div class="c k57 c2">3star</div>
<div class="c k58 c3">Unknown</div>
<div class="c k59 c4">Run Of House <i>...</i></div>
<div class="c k5 c5">Tue</div>
<div class="c k6 c6">08/08/2017</div>
<div class="c k7 c7">Fri</div>
<div class="c k6 c8">11/08/2017</div>
<div class="c k60 c9">Bonotel</div>
<div class="c ct c10"></div>
<div class="c ct c11"></div>
<div class="c ct c12"></div>
<div class="c rt k6 c13">96.29</div>
<div class="c rt k6 c14">48.15</div>
<div class="c rt k6 c15">96.29</div>
<div class="c rt k10 c16">0.00</div>
<div class="c ct c17"></div>
<div class="c k11 c18">XML</div>
<div class="c c19"></div>
</div>
<div class="r w" style="top:420px"></div>
<div class="r" style="top:420px;width:1134px">
<div class="c k22 c0">Las Vegas (<i>...</i></div>
<div class="c k56 c1">Circus Circus Hotel, <i>...</i></div>
<div class="c k57 c2">3star</div>
<div class="c k58 c3">Unknown</div>
<div class="c k59 c4">Run Of House <i>...</i></div>
<div class="c k5 c5">Tue</div>
<div class="c k6 c6">08/08/2017</div>
<div class="c k7 c7">Fri</div>
<div class="c k6 c8">11/08/2017</div>
<div class="c k60 c9">Bonotel</div>
<div class="c ct c10"></div>
<div class="c ct c11"></div>
<div class="c ct c12"></div>
<div class="c rt k6 c13">96.29</div>
<div class="c rt k6 c14">48.15</div>
<div class="c rt k6 c15">96.29</div>
<div class="c rt k10 c16">0.00</div>
<div class="c ct c17"></div>
<div class="c k11 c18">XML</div>
<div class="c c19"></div>
</div>
<div class="r w" style="top:435px"></div>
<div class="r" style="top:435px;width:1134px">
<div class="c k22 c0">Las Vegas (<i>...</i></div>
<div class="c k23 c1">El Cortez Hotel &amp; Cas<i>...</i></div>
<div class="c k16 c2">3*</div>
<div class="c k17 c3">Roomonly</div>
<div class="c k61 c4">Standard, Tow<i>...</i></div>
<div class="c k5 c5">Tue</div>
<div class="c k6 c6">08/08/2017</div>
<div class="c k7 c7">Fri</div>
<div class="c k6 c8">11/08/2017</div>
<div class="c k19 c9">Tourico <i>...</i></div>
<div class="c ct k9 c10">*</div>
<div class="c ct c11"></div>
<div class="c ct c12"></div>
<div class="c rt k6 c13">96.72</div>
<div class="c rt k6 c14">48.36</div>
<div class="c rt k6 c15">96.72</div>
<div class="c rt k10 c16">0.00</div>
<div class="c ct c17"></div>
<div class="c k11 c18">XML</div>
<div class="c c19"></div>
</div>
<div class="r w" style="top:450px"></div>
<div class="r" style="top:450px;width:1134px">
<div class="c k22 c0">Las Vegas (<i>...</i></div>
<div class="c k56 c1">Circus Circus Hotel, <i>...</i></div>
<div class="c k57 c2">3star</div>
<div class="c k3 c3">Room Only</div>
<div class="c k59 c4">Run Of House <i>...</i></div>
<div class="c k5 c5">Tue</div>
<div class="c k6 c6">08/08/2017</div>
<div class="c k7 c7">Fri</div>
<div class="c k6 c8">11/08/2017</div>
<div class="c k60 c9">Bonotel</div>
<div class="c ct c10"></div>
<div class="c ct c11"></div>
<div class="c ct c12"></div>
<div class="c rt k6 c13">96.80</div>
<div class="c rt k6 c14">48.40</div>
<div class="c rt k6 c15">96.80</div>
<div class="c rt k10 c16">0.00</div>
<div class="c ct c17"></div>
<div class="c k11 c18">XML</div>
<div class="c c19"></div>
</div>
<div class="r w" style="top:465px"></div>
<div class="r" style="top:465px;width:1134px">
<div class="c k22 c0">Las Vegas (<i>...</i></div>
<div class="c k56 c1">Circus Circus Hotel, <i>...</i></div>
<div class="c k57 c2">3star</div>
<div class="c k3 c3">Room Only</div>
<div class="c k59 c4">Run Of House <i>...</i></div>
<div class="c k5 c5">Tue</div>
<div class="c k6 c6">08/08/2017</div>
<div class="c k7 c7">Fri</div>
<div class="c k6 c8">11/08/2017</div>
<div class="c k60 c9">Bonotel</div>
<div class="c ct c10"></div>
<div class="c ct c11"></div>
<div class="c ct c12"></div>
<div class="c rt k6 c13">96.80</div>
<div class="c rt k6 c14">48.40</div>
<div class="c rt k6 c15">96.80</div>
<div class="c rt k10 c16">0.00</div>
<div class="c ct c17"></div>
<div class="c k11 c18">XML</div>
<div class="c c19"></div>
</div>
<div class="r w" style="top:480px"></div>
<div class="r" style="top:480px;width:1134px">
<div class="c k60 c0">Henderson <i>...</i></div>
<div class="c k62 c1">Sunset Station Hotel <i>...</i></div>
<div class="c k2 c2">3.0</div>
<div class="c k3 c3">Room Only</div>
<div class="c k59 c4">Double Run Of<i>...</i></div>
<div class="c k5 c5">Tue</div>
<div class="c k6 c6">08/08/2017</div>
<div class="c k7 c7">Fri</div>
<div class="c k6 c8">11/08/2017</div>
<div class="c k8 c9">Get A Bed</div>
<div class="c ct k9 c10">*</div>
<div class="c ct c11"></div>
<div class="c ct c12"></div>
<div class="c rt k6 c13">97.08</div>
<div class="c rt k6 c14">48.54</div>
<div class="c rt k6 c15">97.08</div>
<div class="c rt k10 c16">0.00</div>
<div class="c ct c17"></div>
<div class="c k11 c18">XML</div>
<div class="c c19"></div>
</div>
<div class="r w" style="top:495px"></div>
<div class="r" style="top:495px;width:1134px">
<div class="c k22 c0">Las Vegas (<i>...</i></div>
<div class="c k55 c1">Excalibur Hotel and C<i>...</i></div>
<div class="c k57 c2">3star</div>
<div class="c k3 c3">Room Only</div>
<div class="c k59 c4">Run Of House <i>...</i></div>
<div class="c k5 c5">Tue</div>
<div class="c k6 c6">08/08/2017</div>
<div class="c k7 c7">Fri</div>
<div class="c k6 c8">11/08/2017</div>
<div class="c k60 c9">Bonotel</div>
<div class="c ct c10"></div>
<div class="c ct c11"></div>
<div class="c ct c12"></div>
<div class="c rt k6 c13">97.65</div>
<div class="c rt k6 c14">48.83</div>
<div class="c rt k6 c15">97.65</div>
<div class="c rt k10 c16">0.00</div>
<div class="c ct c17"></div>
<div class="c k11 c18">XML</div>
<div class="c c19"></div>
</div>
<div class="r w" style="top:510px"></div>
<div class="r" style="top:510px;width:1134px">
<div class="c k63 c0">North Las V<i>...</i></div>
<div class="c k64 c1">Fiesta Rancho Hotel <i>...</i></div>
<div class="c k2 c2">3.0</div>
<div class="c k3 c3">Room Only</div>
<div class="c k65 c4">Standard King <i>...</i></div>
<div class="c k5 c5">Tue</div>
<div class="c k6 c6">08/08/2017</div>
<div class="c k7 c7">Fri</div>
<div class="c k6 c8">11/08/2017</div>
<div class="c k8 c9">Get A Bed</div>
<div class="c ct k9 c10">*</div>
<div class="c ct c11"></div>
<div class="c ct c12"></div>
<div class="c rt k6 c13">98.21</div>
<div class="c rt k6 c14">49.11</div>
<div class="c rt k6 c15">98.21</div>
<div class="c rt k10 c16">0.00</div>
<div class="c ct c17"></div>
<div class="c k11 c18">XML</div>
<div class="c c19"></div>
</div>
<div class="r w" style="top:525px"></div>
<div class="r" style="top:525px;width:1134px">
<div class="c k63 c0">North Las V<i>...</i></div>
<div class="c k64 c1">Fiesta Rancho Hotel <i>...</i></div>
<div class="c k2 c2">3.0</div>
<div class="c k3 c3">Room Only</div>
<div class="c k41 c4">Standard Two <i>...</i></div>
<div class="c k5 c5">Tue</div>
<div class="c k6 c6">08/08/2017</div>
<div class="c k7 c7">Fri</div>
<div class="c k6 c8">11/08/2017</div>
<div class="c k8 c9">Get A Bed</div>
<div class="c ct k9 c10">*</div>
<div class="c ct c11"></div>
<div class="c ct c12"></div>
<div class="c rt k6 c13">98.21</div>
<div class="c rt k6 c14">49.11</div>
<div class="c rt k6 c15">98.21</div>
<div class="c rt k10 c16">0.00</div>
<div class="c ct c17"></div>
<div class="c k11 c18">XML</div>
<div class="c c19"></div>
</div>
<div class="r w sel" style="top:540px"></div>
<div class="r sel" style="top:540px;width:1134px">
<div class="c k12 c0">Las Vegas T<i>...</i></div>
<div class="c k60 c1">Westgate Las Vegas <i>...</i></div>
<div class="c k2 c2">4.0</div>
<div class="c k3 c3">Room Only</div>
<div class="c k66 c4">Premium Room</div>
<div class="c k5 c5">Tue</div>
<div class="c k6 c6">08/08/2017</div>
<div class="c k7 c7">Fri</div>
<div class="c k6 c8">11/08/2017</div>
<div class="c k8 c9">Get A Bed</div>
<div class="c ct k9 c10">*</div>
<div class="c ct c11"></div>
<div class="c ct c12"></div>
<div class="c rt k6 c13">98.63</div>
<div class="c rt k6 c14">49.32</div>
<div class="c rt k6 c15">98.63</div>
<div class="c rt k10 c16">0.00</div>
<div class="c ct c17"></div>
<div class="c k11 c18">XML</div>
<div class="c c19"></div>
</div>
<div class="r w" style="top:555px"></div>
<div class="r" style="top:555px;width:1134px">
<div class="c k22 c0">Las Vegas (<i>...</i></div>
<div class="c k67 c1">The D Las Vegas</div>
<div class="c k16 c2">3*</div>
<div class="c k17 c3">Roomonly</div>
<div class="c k26 c4">Standard</div>
<div class="c k5 c5">Tue</div>
<div class="c k6 c6">08/08/2017</div>
<div class="c k7 c7">Fri</div>
<div class="c k6 c8">11/08/2017</div>
<div class="c k19 c9">Tourico <i>...</i></div>
<div class="c ct k9 c10">*</div>
<div class="c ct c11"></div>
<div class="c ct c12"></div>
<div class="c rt k6 c13">98.64</div>
<div class="c rt k6 c14">49.32</div>
<div class="c rt k6 c15">98.64</div>
<div class="c rt k10 c16">0.00</div>
<div class="c ct c17"></div>
<div class="c k11 c18">XML</div>
<div class="c c19"></div>
</div>
<div class="r w" style="top:570px"></div>
<div class="r" style="top:570px;width:1134px">
<div class="c k0 c0">Downtown <i>...</i></div>
<div class="c k44 c1">Stratosphere</div>
<div class="c k2 c2">3.0</div>
<div class="c k3 c3">Room Only</div>
<div class="c k45 c4">Double Or Twi<i>...</i></div>
<div class="c k5 c5">Tue</div>
<div class="c k6 c6">08/08/2017</div>
<div class="c k7 c7">Fri</div>
<div class="c k6 c8">11/08/2017</div>
<div class="c k8 c9">Get A Bed</div>
<div class="c ct k9 c10">*</div>
<div class="c ct c11"></div>
<div class="c ct c12"></div>
<div class="c rt k6 c13">99.75</div>
<div class="c rt k6 c14">49.88</div>
<div class="c rt k6 c15">99.75</div>
<div class="c rt k10 c16">0.00</div>
<div class="c ct c17"></div>
<div class="c k11 c18">XML</div>
<div class="c c19"></div>
</div>
</div>
<div class="a" style="left:1573px;top:153px;width:16px;height:603px;background:repeating-conic-gradient(#fff 0 25%,#d4d0c8 0 50%) 0 0/2px 2px"></div>
<div class="a" style="left:1573px;top:153px;width:16px;height:16px;background:#d4d0c8;border-top:1px solid #d4d0c8;border-left:1px solid #d4d0c8;border-right:1px solid #404040;border-bottom:1px solid #404040"></div><div class="a" style="left:1574px;top:154px;width:14px;height:14px;border-top:1px solid #fff;border-left:1px solid #fff;border-right:1px solid #808080;border-bottom:1px solid #808080"></div>
<div class="a" style="left:1573px;top:169px;width:16px;height:11px;background:#d4d0c8;border-top:1px solid #d4d0c8;border-left:1px solid #d4d0c8;border-right:1px solid #404040;border-bottom:1px solid #404040"></div><div class="a" style="left:1574px;top:170px;width:14px;height:9px;border-top:1px solid #fff;border-left:1px solid #fff;border-right:1px solid #808080;border-bottom:1px solid #808080"></div>
<div class="a" style="left:1573px;top:740px;width:16px;height:16px;background:#d4d0c8;border-top:1px solid #d4d0c8;border-left:1px solid #d4d0c8;border-right:1px solid #404040;border-bottom:1px solid #404040"></div><div class="a" style="left:1574px;top:741px;width:14px;height:14px;border-top:1px solid #fff;border-left:1px solid #fff;border-right:1px solid #808080;border-bottom:1px solid #808080"></div>
<svg style="left:1573px;top:153px" width="16" height="16"><path d="M4 10h7l-3.5-4z" fill="#000"/></svg>
<svg style="left:1573px;top:740px" width="16" height="16"><path d="M4 6h7l-3.5 4z" fill="#000"/></svg>
<div class="t" style="left:218px;top:783px;letter-spacing:0.016px;">First portion: 7.6 sec, total search time: 12.1 sec</div>
<div class="a" style="left:1560px;top:778px;width:23px;height:22px;background:#d4d0c8;border-top:1px solid #fff;border-left:1px solid #fff;border-right:1px solid #404040;border-bottom:1px solid #404040"></div>
<div class="a" style="left:1561px;top:779px;width:21px;height:20px;border-right:1px solid #808080;border-bottom:1px solid #808080"></div>
<div class="t b" style="left:1560px;top:778px;width:22px;text-align:center;font-family:'Liberation Serif',serif;font-size:16px;line-height:22px;color:#0050a0">i</div>
<div class="a" style="left:211px;top:805px;width:1382px;height:1px;background:#808080"></div>
<div class="a" style="left:263px;top:806px;width:1px;height:17px;background:#808080"></div>
<div class="a" style="left:304px;top:806px;width:1px;height:17px;background:#808080"></div>
<div class="a" style="left:305px;top:806px;width:64px;height:17px;background:#c8ffc0"></div>
<div class="a" style="left:369px;top:805px;width:60px;height:18px;background:#000080;border-radius:0 0 3px 3px"></div>
<div class="a" style="left:525px;top:806px;width:1px;height:17px;background:#808080"></div>
<div class="t" style="left:215px;top:808px;letter-spacing:-0.58px;color:#000">Summary</div>
<div class="t" style="left:266px;top:808px;letter-spacing:-0.309px;color:#000">Search</div>
<div class="t" style="left:308px;top:808px;letter-spacing:-0.513px;color:#000">Acc 2A NYC</div>
<div class="t" style="left:372px;top:808px;letter-spacing:-0.47px;color:#fff">Acc 2A LAS</div>
<div class="t" style="left:433px;top:808px;letter-spacing:-0.42px;color:#000">Financial Summary</div>
<div class="t" style="left:806px;top:832px;letter-spacing:-0.223px;">User: 446 - Clark Silk</div>
<div class="t" style="left:916px;top:832px;letter-spacing:-0.116px;">Retailer: 'Ocean-Florida'</div>
<div class="t" style="left:1042px;top:832px;letter-spacing:-0.059px;">Client: none</div>
<div class="t" style="left:1490px;top:832px;letter-spacing:-0.336px;width:102px;text-align:right">15:36 GMT</div>
<div class="a" style="left:0;top:858px;width:1600px;height:2px;background:#404040"></div>
</div></body></html>
